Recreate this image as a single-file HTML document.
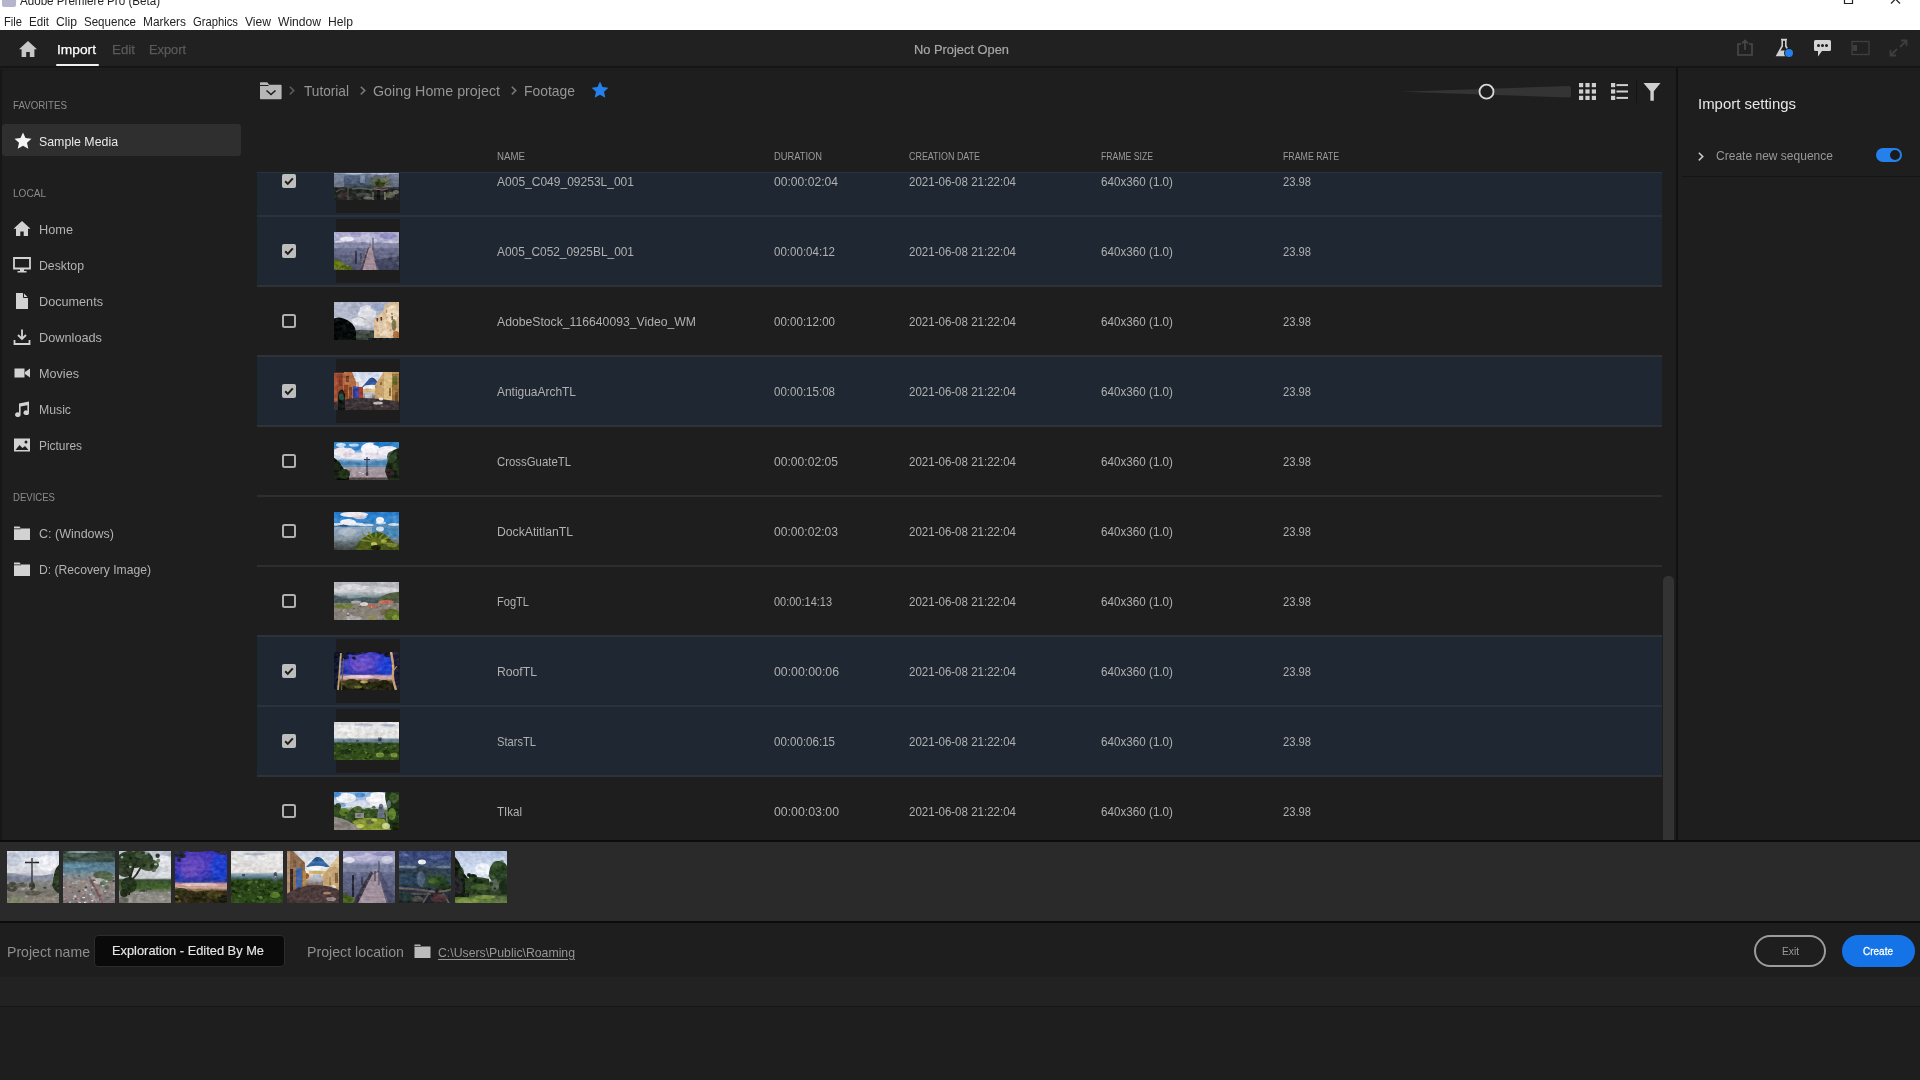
<!DOCTYPE html>
<html lang="en">
<head>
<meta charset="utf-8">
<title>Adobe Premiere Pro (Beta)</title>
<style>
html,body{margin:0;padding:0}
body{width:1920px;height:1080px;overflow:hidden;background:#1e1e1e;position:relative;font-family:'Liberation Sans', sans-serif;}
.t{position:absolute;white-space:pre;transform-origin:0 50%;display:block}
.appicon{position:absolute;left:2px;top:-7px;width:14px;height:14px;border-radius:2px;background:#2a2a6e;opacity:.35}
.th{overflow:hidden;background:#555}

</style>
</head>
<body>
<div style="position:absolute;left:0px;top:0px;width:1920px;height:30px;background:#ffffff;"></div>
<div class="appicon"></div>
<span class="t" style="left:20px;top:-6.50px;font-size:12px;line-height:14px;color:#222;transform:scaleX(0.9673);">Adobe Premiere Pro (Beta)</span>
<span class="t" style="left:4px;top:15.00px;font-size:12.5px;line-height:15px;color:#222;transform:scaleX(0.8930);">File</span>
<span class="t" style="left:29px;top:15.00px;font-size:12.5px;line-height:15px;color:#222;transform:scaleX(0.9282);">Edit</span>
<span class="t" style="left:56px;top:15.00px;font-size:12.5px;line-height:15px;color:#222;transform:scaleX(0.9746);">Clip</span>
<span class="t" style="left:84px;top:15.00px;font-size:12.5px;line-height:15px;color:#222;transform:scaleX(0.9234);">Sequence</span>
<span class="t" style="left:143px;top:15.00px;font-size:12.5px;line-height:15px;color:#222;transform:scaleX(0.9522);">Markers</span>
<span class="t" style="left:193px;top:15.00px;font-size:12.5px;line-height:15px;color:#222;transform:scaleX(0.8994);">Graphics</span>
<span class="t" style="left:245px;top:15.00px;font-size:12.5px;line-height:15px;color:#222;transform:scaleX(0.9674);">View</span>
<span class="t" style="left:278px;top:15.00px;font-size:12.5px;line-height:15px;color:#222;transform:scaleX(0.9670);">Window</span>
<span class="t" style="left:328px;top:15.00px;font-size:12.5px;line-height:15px;color:#222;transform:scaleX(0.9721);">Help</span>
<svg style="position:absolute;left:1840px;top:0" width="70" height="8" viewBox="0 0 70 8"><path d="M4.5 0v3.5h8V0" fill="none" stroke="#222" stroke-width="1.2"/><path d="M51 3.5L55.5 -1L60 3.5" fill="none" stroke="#222" stroke-width="1.2"/></svg>
<div style="position:absolute;left:0px;top:30px;width:1920px;height:37px;background:#212121;"></div>
<div style="position:absolute;left:0px;top:66px;width:1920px;height:2px;background:#151515;"></div>
<div style="position:absolute;left:0px;top:70px;width:1920px;height:1px;background:#1b1b1b;"></div>
<svg style="position:absolute;left:18px;top:40px" width="20" height="18" viewBox="0 0 20 18"><path d="M10 1L1 9.2h2.6V17h4.6v-5h3.6v5h4.6V9.2H19z" fill="#c8c8c8"/></svg>
<span class="t" style="left:57px;top:42.00px;font-size:13.2px;line-height:16px;color:#ffffff;transform:scaleX(1.0435);-webkit-text-stroke:0.25px #fff;">Import</span>
<div style="position:absolute;left:56px;top:64px;width:43px;height:2px;background:#f0f0f0;border-radius:1px;"></div>
<span class="t" style="left:112px;top:42.00px;font-size:13.2px;line-height:16px;color:#5a5a5a;transform:scaleX(1.0117);-webkit-text-stroke:0.25px #5a5a5a;">Edit</span>
<span class="t" style="left:149px;top:42.00px;font-size:13.2px;line-height:16px;color:#5a5a5a;transform:scaleX(0.9705);-webkit-text-stroke:0.25px #5a5a5a;">Export</span>
<span class="t" style="left:914px;top:41.60px;font-size:13.6px;line-height:16px;color:#a8a8a8;transform:scaleX(0.9453);-webkit-text-stroke:0.2px #a8a8a8;">No Project Open</span>
<svg style="position:absolute;left:1736px;top:39px" width="18" height="18" viewBox="0 0 18 18"><path d="M5 5H2v11h14V5h-3" fill="none" stroke="#4a4a4a" stroke-width="1.6"/><path d="M9 11V2M6 4.5L9 1.5l3 3" fill="none" stroke="#4a4a4a" stroke-width="1.6"/></svg>
<svg style="position:absolute;left:1774px;top:38px" width="22" height="22" viewBox="0 0 22 22"><path d="M7 1.5h6M8.2 2v6L3 17.5h14L11.8 8V2z" fill="none" stroke="#d0d0d0" stroke-width="1.6"/><path d="M6 12.5L3.2 17.5h13.6L14 12.5z" fill="#d0d0d0"/><circle cx="15" cy="15" r="5" fill="#1e1e1e"/><circle cx="15" cy="15" r="4" fill="#2680eb"/></svg>
<svg style="position:absolute;left:1813px;top:39px" width="20" height="20" viewBox="0 0 20 20"><path d="M2.5 1h14a1.5 1.5 0 0 1 1.5 1.5v8a1.5 1.5 0 0 1-1.5 1.5H9l-4 5.5V12H2.5A1.5 1.5 0 0 1 1 10.500v-8A1.5 1.5 0 0 1 2.500 1z" fill="#d4d4d4"/><circle cx="5.500" cy="6.5" r="1.5" fill="#1e1e1e"/><circle cx="9.5" cy="6.5" r="1.5" fill="#1e1e1e"/><circle cx="13.5" cy="6.5" r="1.5" fill="#1e1e1e"/></svg>
<svg style="position:absolute;left:1851px;top:40px" width="20" height="16" viewBox="0 0 20 16"><rect x="1" y="1.5" width="17" height="13" fill="none" stroke="#3e3e3e" stroke-width="1.4"/><rect x="2" y="5" width="4" height="6" fill="#3e3e3e"/></svg>
<svg style="position:absolute;left:1889px;top:39px" width="20" height="18" viewBox="0 0 20 18"><path d="M11 8L17 2M12 1.500h5.5V7M8 10L2 16M1.500 11v5.500H7" fill="none" stroke="#3e3e3e" stroke-width="1.8"/></svg>
<span class="t" style="left:13px;top:100.00px;font-size:10.4px;line-height:12px;color:#8c8c8c;transform:scaleX(0.9384);">FAVORITES</span>
<div style="position:absolute;left:2px;top:124px;width:239px;height:32px;background:#2f2f2f;border-radius:3px;"></div>
<svg style="position:absolute;left:13.5px;top:131.5px" width="18" height="18" viewBox="0 0 18 18"><path d="M9 0.500l2.500 5.600 6 .600-4.500 4.100 1.300 6L9 13.700 3.700 16.800l1.300-6L0.500 6.700l6-.600z" fill="#f4f4f4"/></svg>
<span class="t" style="left:39px;top:134.00px;font-size:13.2px;line-height:16px;color:#e8e8e8;transform:scaleX(0.9372);">Sample Media</span>
<span class="t" style="left:13px;top:188.00px;font-size:10.4px;line-height:12px;color:#8c8c8c;transform:scaleX(0.9684);">LOCAL</span>
<svg style="position:absolute;left:13px;top:220px" width="18" height="18" viewBox="0 0 18 18"><path d="M9 1L0.500 8.700H3V16h4.300v-4.600h3.400V16H15V8.700h2.500z" fill="#d2d2d2"/></svg>
<span class="t" style="left:39px;top:222.00px;font-size:13.2px;line-height:16px;color:#b2b2b2;transform:scaleX(0.9663);">Home</span>
<svg style="position:absolute;left:13px;top:256px" width="18" height="18" viewBox="0 0 18 18"><path d="M1 2h16v10.500H1z" fill="none" stroke="#d2d2d2" stroke-width="1.800"/><path d="M7 13h4v2h2.500v1.500h-9V15H7z" fill="#d2d2d2"/></svg>
<span class="t" style="left:39px;top:258.00px;font-size:13.2px;line-height:16px;color:#b2b2b2;transform:scaleX(0.9299);">Desktop</span>
<svg style="position:absolute;left:13px;top:292px" width="18" height="18" viewBox="0 0 18 18"><path d="M3 1h7.500L15 5.500V17H3z" fill="#d2d2d2"/><path d="M10.500 1v4.500H15" fill="none" stroke="#1e1e1e" stroke-width="1"/></svg>
<span class="t" style="left:39px;top:294.00px;font-size:13.2px;line-height:16px;color:#b2b2b2;transform:scaleX(0.9595);">Documents</span>
<svg style="position:absolute;left:13px;top:328px" width="18" height="18" viewBox="0 0 18 18"><path d="M9 1.500v9M5 7l4 4 4-4" fill="none" stroke="#d2d2d2" stroke-width="1.800"/><path d="M1.500 12v4h15v-4" fill="none" stroke="#d2d2d2" stroke-width="1.800"/></svg>
<span class="t" style="left:39px;top:330.00px;font-size:13.2px;line-height:16px;color:#b2b2b2;transform:scaleX(0.9655);">Downloads</span>
<svg style="position:absolute;left:13px;top:364px" width="18" height="18" viewBox="0 0 18 18"><path d="M1.500 4.500h10v9h-10z" fill="#d2d2d2"/><path d="M12 8l5-3.500v9L12 10z" fill="#d2d2d2"/></svg>
<span class="t" style="left:39px;top:366.00px;font-size:13.2px;line-height:16px;color:#b2b2b2;transform:scaleX(0.9574);">Movies</span>
<svg style="position:absolute;left:13px;top:400px" width="18" height="18" viewBox="0 0 18 18"><path d="M6 3.500L16 1.500v11.200a2.800 2.300 0 1 1-1.600-2V5.200L7.600 6.600v8a2.800 2.300 0 1 1-1.600-2z" fill="#d2d2d2"/></svg>
<span class="t" style="left:39px;top:402.00px;font-size:13.2px;line-height:16px;color:#b2b2b2;transform:scaleX(0.9292);">Music</span>
<svg style="position:absolute;left:13px;top:436px" width="18" height="18" viewBox="0 0 18 18"><path d="M1 2.500h16v13H1z" fill="#d2d2d2"/><path d="M2.500 14l4-5 3 3 2.500-2 3.500 4z" fill="#1e1e1e"/><circle cx="13" cy="6" r="1.500" fill="#1e1e1e"/></svg>
<span class="t" style="left:39px;top:438.00px;font-size:13.2px;line-height:16px;color:#b2b2b2;transform:scaleX(0.9026);">Pictures</span>
<span class="t" style="left:13px;top:492.00px;font-size:10.4px;line-height:12px;color:#8c8c8c;transform:scaleX(0.9205);">DEVICES</span>
<svg style="position:absolute;left:13px;top:524px" width="18" height="18" viewBox="0 0 18 18"><path d="M1 2.500h5.500l1.500 2H17V16H1z" fill="#d2d2d2"/><path d="M1 4.800h7" stroke="#1e1e1e" stroke-width="0.800"/></svg>
<span class="t" style="left:39px;top:526.00px;font-size:13.2px;line-height:16px;color:#b2b2b2;transform:scaleX(0.9477);">C: (Windows)</span>
<svg style="position:absolute;left:13px;top:560px" width="18" height="18" viewBox="0 0 18 18"><path d="M1 2.500h5.500l1.500 2H17V16H1z" fill="#d2d2d2"/><path d="M1 4.800h7" stroke="#1e1e1e" stroke-width="0.800"/></svg>
<span class="t" style="left:39px;top:562.00px;font-size:13.2px;line-height:16px;color:#b2b2b2;transform:scaleX(0.9206);">D: (Recovery Image)</span>
<svg style="position:absolute;left:259px;top:81px" width="24" height="20" viewBox="0 0 24 20"><path d="M1.800 1.200h6.400l2 2.500h11.600a.8.8 0 0 1 .8.800V17.400a.8.800 0 0 1-.8.800H1.800a.8.800 0 0 1-.8-.8V2a.8.800 0 0 1 .8-.8z" fill="#b6b6b6"/><path d="M1 4.500h8.500" stroke="#1e1e1e" stroke-width="1"/><path d="M7.500 9.500l4.500 4 4.500-4" fill="none" stroke="#1e1e1e" stroke-width="1.600"/></svg>
<svg style="position:absolute;left:288px;top:85px" width="8" height="12" viewBox="0 0 8 12"><path d="M1.800 1.800L5.800 5.600l-4 3.800" fill="none" stroke="#5c5c5c" stroke-width="1.500"/></svg>
<span class="t" style="left:304px;top:82.00px;font-size:15px;line-height:18px;color:#959595;transform:scaleX(0.9097);">Tutorial</span>
<svg style="position:absolute;left:359px;top:85px" width="8" height="12" viewBox="0 0 8 12"><path d="M1.800 1.800L5.800 5.600l-4 3.800" fill="none" stroke="#7a7a7a" stroke-width="1.500"/></svg>
<span class="t" style="left:373px;top:82.00px;font-size:15px;line-height:18px;color:#959595;transform:scaleX(0.9520);">Going Home project</span>
<svg style="position:absolute;left:510px;top:85px" width="8" height="12" viewBox="0 0 8 12"><path d="M1.800 1.800L5.800 5.600l-4 3.800" fill="none" stroke="#7a7a7a" stroke-width="1.500"/></svg>
<span class="t" style="left:524px;top:82.00px;font-size:15px;line-height:18px;color:#959595;transform:scaleX(0.9265);">Footage</span>
<svg style="position:absolute;left:591px;top:81px" width="18" height="18" viewBox="0 0 18 18"><path d="M9 0.500l2.500 5.600 6 .600-4.500 4.100 1.300 6L9 13.700 3.700 16.800l1.300-6L0.500 6.700l6-.600z" fill="#2680eb"/></svg>
<svg style="position:absolute;left:1398px;top:80px" width="180" height="24" viewBox="0 0 180 24"><path d="M3 11.700L171 6a2 2 0 0 1 2 2v7.500a2 2 0 0 1-2 2z" fill="#343434"/><circle cx="88.500" cy="11.700" r="7" fill="#1e1e1e" stroke="#d8d8d8" stroke-width="1.800"/></svg>
<svg style="position:absolute;left:1579px;top:83px" width="18" height="18" viewBox="0 0 18 18"><rect x="0" y="0" width="4.200" height="4.200" fill="#cfcfcf"/><rect x="0" y="6.4" width="4.200" height="4.200" fill="#cfcfcf"/><rect x="0" y="12.8" width="4.200" height="4.200" fill="#cfcfcf"/><rect x="6.4" y="0" width="4.200" height="4.200" fill="#cfcfcf"/><rect x="6.4" y="6.4" width="4.200" height="4.200" fill="#cfcfcf"/><rect x="6.4" y="12.8" width="4.200" height="4.200" fill="#cfcfcf"/><rect x="12.8" y="0" width="4.200" height="4.200" fill="#cfcfcf"/><rect x="12.8" y="6.4" width="4.200" height="4.200" fill="#cfcfcf"/><rect x="12.8" y="12.8" width="4.200" height="4.200" fill="#cfcfcf"/></svg>
<svg style="position:absolute;left:1611px;top:83px" width="18" height="18" viewBox="0 0 18 18"><rect x="0" y="0" width="4.200" height="4.200" fill="#cfcfcf"/><rect x="5.500" y="1.1" width="11.500" height="2" fill="#cfcfcf"/><rect x="0" y="6.4" width="4.200" height="4.200" fill="#cfcfcf"/><rect x="5.500" y="7.5" width="11.500" height="2" fill="#cfcfcf"/><rect x="0" y="12.8" width="4.200" height="4.200" fill="#cfcfcf"/><rect x="5.500" y="13.9" width="11.500" height="2" fill="#cfcfcf"/></svg>
<div style="position:absolute;left:1636px;top:80px;width:1px;height:23px;background:#141414;"></div>
<svg style="position:absolute;left:1643px;top:82px" width="18" height="20" viewBox="0 0 18 20"><path d="M0.500 1h17L10.800 9.200V18.800H7.400V9.200z" fill="#cfcfcf"/></svg>
<span class="t" style="left:497px;top:151.00px;font-size:10px;line-height:12px;color:#9a9a9a;transform:scaleX(0.9686);">NAME</span>
<span class="t" style="left:774px;top:151.00px;font-size:10px;line-height:12px;color:#9a9a9a;transform:scaleX(0.9323);">DURATION</span>
<span class="t" style="left:909px;top:151.00px;font-size:10px;line-height:12px;color:#9a9a9a;transform:scaleX(0.8915);">CREATION DATE</span>
<span class="t" style="left:1101px;top:151.00px;font-size:10px;line-height:12px;color:#9a9a9a;transform:scaleX(0.8664);">FRAME SIZE</span>
<span class="t" style="left:1283px;top:151.00px;font-size:10px;line-height:12px;color:#9a9a9a;transform:scaleX(0.8789);">FRAME RATE</span>
<div style="position:absolute;left:257px;top:172px;width:1406px;height:668px;overflow:hidden">
<div style="position:absolute;left:0;top:-26px;width:1405px;height:70px;background:#1f2832"></div>
<div style="position:absolute;left:79px;top:-23px;width:64px;height:64px;background:#1d1d1e"></div>
<div style="position:absolute;left:0;top:-27px;width:1405px;height:2px;background:#2f3236"></div>
<svg style="position:absolute;left:25px;top:2px" width="14" height="14" viewBox="0 0 14 14"><rect width="14" height="14" rx="2" fill="#bdbdbd"/><path d="M3.200 7.200l2.600 2.700 5-5.600" fill="none" stroke="#1c1c1c" stroke-width="2"/></svg>
<svg style="position:absolute;left:77px;top:-10px" width="65" height="38" viewBox="0 0 65 38" preserveAspectRatio="none"><defs><linearGradient id="g1" x1="0" y1="0" x2="0" y2="1"><stop offset="0" stop-color="#8d93b4"/><stop offset="0.26" stop-color="#9096b6"/><stop offset="0.32" stop-color="#a4aac6"/><stop offset="0.36" stop-color="#65728c"/><stop offset="0.5" stop-color="#4c5c72"/><stop offset="0.62" stop-color="#3e4a56"/><stop offset="0.7" stop-color="#2e3030"/><stop offset="1" stop-color="#2a2a28"/></linearGradient><filter id="b_t_palm" x="-20%" y="-20%" width="140%" height="140%" color-interpolation-filters="sRGB"><feGaussianBlur in="SourceGraphic" stdDeviation="0.6" result="b"/><feTurbulence type="fractalNoise" baseFrequency="0.22 0.3" numOctaves="3" seed="56" result="n"/><feColorMatrix in="n" type="matrix" values="0.8 0.8 0.8 0 -0.7  0.8 0.8 0.8 0 -0.7  0.8 0.8 0.8 0 -0.7  0 0 0 0 1" result="g"/><feComposite in="b" in2="g" operator="arithmetic" k1="0" k2="1" k3="0.16" k4="-0.080"/></filter></defs><g filter="url(#b_t_palm)"><rect x="-3" y="-3" width="71" height="44" fill="url(#g1)"/><rect x="-2" y="13" width="12" height="12" fill="#8a94aa" opacity="0.55"/><rect x="10" y="14" width="14" height="8" fill="#50607c" opacity="0.5"/><rect x="26" y="13" width="5" height="8" fill="#8c94ac" opacity="0.6"/><rect x="50" y="13" width="18" height="12" fill="#7c829c" opacity="0.6"/><ellipse cx="20" cy="11.5" rx="9" ry="1.2" fill="#b8bcd4" opacity="0.9"/><ellipse cx="46" cy="11.5" rx="10" ry="1.2" fill="#b4b8d0" opacity="0.9"/><path d="M46 24L36 16M46 24L40 14M46 24L46 13M46 24L52 14M46 24L57 17M46 24L59 22M46 24L35 21M46 24l12 4M46 24l-10 4" fill="none" stroke="#5a5c3e" stroke-width="1.6"/><ellipse cx="46" cy="21" rx="5" ry="4" fill="#2c3a18" opacity="0.95"/><ellipse cx="50" cy="18" rx="4" ry="3" fill="#6c6e4a" opacity="0.7"/><ellipse cx="41" cy="18" rx="3" ry="2" fill="#6a6c50" opacity="0.6"/><path d="M-2 40V27q8-3 16-1t14 1q10 2 20 0t19 1V40z" fill="#262827"/><path d="M2 30q4-4 10-3M4 34h10M14 25v14" fill="none" stroke="#5a5450" stroke-width="1"/><ellipse cx="8" cy="33" rx="4" ry="3" fill="#3a302e" opacity="0.8"/><path d="M18 27q10-2 20 1" fill="none" stroke="#54645c" stroke-width="1.4"/><ellipse cx="30" cy="33" rx="8" ry="2" fill="#4c5650" opacity="0.7"/><path d="M40 27l8 1 6-1" fill="none" stroke="#94606c" stroke-width="1"/><rect x="43" y="28" width="3" height="10" fill="#161616"/><rect x="38" y="30" width="2" height="8" fill="#55564c"/><rect x="50" y="30" width="2" height="8" fill="#6a6a5c"/><ellipse cx="56" cy="33" rx="5" ry="3" fill="#6c6a54" opacity="0.8"/><ellipse cx="34" cy="36" rx="5" ry="1.6" fill="#74746a" opacity="0.8"/><ellipse cx="62" cy="30" rx="3" ry="2" fill="#8a8c90" opacity="0.7"/></g></svg>
<span class="t" style="left:240px;top:2.20px;font-size:13.1px;line-height:16px;color:#b0b0b0;transform:scaleX(0.9177);">A005_C049_09253L_001</span>
<span class="t" style="left:517px;top:2.20px;font-size:13.1px;line-height:16px;color:#b0b0b0;transform:scaleX(0.9252);">00:00:02:04</span>
<span class="t" style="left:652px;top:2.20px;font-size:13.1px;line-height:16px;color:#b0b0b0;transform:scaleX(0.8800);">2021-06-08 21:22:04</span>
<span class="t" style="left:844px;top:2.20px;font-size:13.1px;line-height:16px;color:#b0b0b0;transform:scaleX(0.8910);">640x360 (1.0)</span>
<span class="t" style="left:1026px;top:2.20px;font-size:13.1px;line-height:16px;color:#b0b0b0;transform:scaleX(0.8541);">23.98</span>
<div style="position:absolute;left:0;top:44px;width:1405px;height:70px;background:#1f2832"></div>
<div style="position:absolute;left:79px;top:47px;width:64px;height:64px;background:#1d1d1e"></div>
<div style="position:absolute;left:0;top:43px;width:1405px;height:2px;background:#2a323d"></div>
<svg style="position:absolute;left:25px;top:72px" width="14" height="14" viewBox="0 0 14 14"><rect width="14" height="14" rx="2" fill="#bdbdbd"/><path d="M3.200 7.200l2.600 2.700 5-5.600" fill="none" stroke="#1c1c1c" stroke-width="2"/></svg>
<svg style="position:absolute;left:77px;top:60px" width="65" height="38" viewBox="0 0 65 38" preserveAspectRatio="none"><defs><linearGradient id="g2" x1="0" y1="0" x2="0" y2="1"><stop offset="0" stop-color="#9b98c6"/><stop offset="0.14" stop-color="#b4b2d4"/><stop offset="0.28" stop-color="#a6a4c4"/><stop offset="0.33" stop-color="#80849f"/><stop offset="0.45" stop-color="#6e7290"/><stop offset="0.7" stop-color="#5c607c"/><stop offset="1" stop-color="#4a4e66"/></linearGradient><filter id="b_t_dock" x="-20%" y="-20%" width="140%" height="140%" color-interpolation-filters="sRGB"><feGaussianBlur in="SourceGraphic" stdDeviation="0.55" result="b"/><feTurbulence type="fractalNoise" baseFrequency="0.22 0.3" numOctaves="3" seed="47" result="n"/><feColorMatrix in="n" type="matrix" values="0.8 0.8 0.8 0 -0.7  0.8 0.8 0.8 0 -0.7  0.8 0.8 0.8 0 -0.7  0 0 0 0 1" result="g"/><feComposite in="b" in2="g" operator="arithmetic" k1="0" k2="1" k3="0.16" k4="-0.080"/></filter></defs><g filter="url(#b_t_dock)"><rect x="-3" y="-3" width="71" height="44" fill="url(#g2)"/><ellipse cx="13" cy="7" rx="7" ry="2.6" fill="#ececf4" opacity="0.95"/><ellipse cx="6" cy="10" rx="5" ry="1.5" fill="#dcdcea" opacity="0.8"/><ellipse cx="28" cy="6" rx="9" ry="4" fill="#c2bed8" opacity="0.8"/><ellipse cx="38" cy="9" rx="6" ry="3" fill="#d0cce0" opacity="0.7"/><ellipse cx="54" cy="4" rx="9" ry="3" fill="#8a88c2" opacity="0.8"/><ellipse cx="57" cy="10" rx="8" ry="1.8" fill="#c8c8de" opacity="0.8"/><ellipse cx="22" cy="3" rx="6" ry="2" fill="#9a96c6" opacity="0.7"/><path d="M-2 12q8-3 16-1t14 2l8-1q12-2 31 0V16H-2z" fill="#8589a6"/><path d="M34 14L25 40H45L38 14z" fill="#a48e9a"/><path d="M34 15l-9 25h3l7-24z" fill="#443e4e"/><path d="M38 15l5 25h3l-7-25z" fill="#5a5468" opacity="0.8"/><path d="M31 22l8 0M29 27h11M27 32h14" fill="none" stroke="#8c7684" stroke-width="0.6"/><path d="M22 19v13" fill="none" stroke="#2c2c38" stroke-width="1.6"/><path d="M27 21v8" fill="none" stroke="#3a3a48" stroke-width="1.2"/><path d="M39 6v13" fill="none" stroke="#55556a" stroke-width="1.2"/><path d="M36 10v6" fill="none" stroke="#62627a" stroke-width="0.8"/><ellipse cx="4" cy="33" rx="6" ry="4.5" fill="#6a7c18"/><ellipse cx="12" cy="36" rx="7" ry="3" fill="#4c5c18"/><ellipse cx="2" cy="28" rx="3" ry="2" fill="#4a5a2c" opacity="0.8"/><ellipse cx="3.8" cy="33.4" rx="0.9" ry="0.8" fill="#5a6c1c" opacity="0.76"/><ellipse cx="9.7" cy="37.1" rx="1.0" ry="0.9" fill="#8a9a28" opacity="0.95"/><ellipse cx="7.5" cy="36.4" rx="1.0" ry="0.9" fill="#8a9a28" opacity="0.6"/><ellipse cx="2.4" cy="37.3" rx="0.9" ry="0.5" fill="#8a9a28" opacity="0.57"/><ellipse cx="15.3" cy="28.4" rx="1.2" ry="1.2" fill="#3c4a14" opacity="0.71"/><ellipse cx="11.5" cy="36.8" rx="1.2" ry="1.3" fill="#3c4a14" opacity="0.83"/><ellipse cx="9.2" cy="37.6" rx="0.7" ry="0.5" fill="#8a9a28" opacity="0.56"/><ellipse cx="3.5" cy="37.7" rx="0.9" ry="0.8" fill="#3c4a14" opacity="0.69"/><ellipse cx="13.3" cy="33.7" rx="1.0" ry="0.8" fill="#8a9a28" opacity="0.91"/><ellipse cx="10.9" cy="37.3" rx="1.3" ry="1.4" fill="#5a6c1c" opacity="0.81"/><path d="M46 40l-6-12 27-4v16z" fill="#3e425a" opacity="0.75"/></g></svg>
<span class="t" style="left:240px;top:72.20px;font-size:13.1px;line-height:16px;color:#b0b0b0;transform:scaleX(0.9089);">A005_C052_0925BL_001</span>
<span class="t" style="left:517px;top:72.20px;font-size:13.1px;line-height:16px;color:#b0b0b0;transform:scaleX(0.8819);">00:00:04:12</span>
<span class="t" style="left:652px;top:72.20px;font-size:13.1px;line-height:16px;color:#b0b0b0;transform:scaleX(0.8800);">2021-06-08 21:22:04</span>
<span class="t" style="left:844px;top:72.20px;font-size:13.1px;line-height:16px;color:#b0b0b0;transform:scaleX(0.8910);">640x360 (1.0)</span>
<span class="t" style="left:1026px;top:72.20px;font-size:13.1px;line-height:16px;color:#b0b0b0;transform:scaleX(0.8541);">23.98</span>
<div style="position:absolute;left:0;top:113px;width:1405px;height:2px;background:#2f3236"></div>
<svg style="position:absolute;left:25px;top:142px" width="14" height="14" viewBox="0 0 14 14"><rect x="1" y="1" width="12" height="12" rx="1.500" fill="#202020" stroke="#b0b0b0" stroke-width="2"/></svg>
<svg style="position:absolute;left:77px;top:130px" width="65" height="38" viewBox="0 0 65 38" preserveAspectRatio="none"><defs><linearGradient id="g3" x1="0" y1="0" x2="0" y2="1"><stop offset="0" stop-color="#a4aac2"/><stop offset="0.3" stop-color="#b2b8cc"/><stop offset="0.6" stop-color="#c4c8d4"/><stop offset="0.8" stop-color="#7a8290"/><stop offset="1" stop-color="#2c3434"/></linearGradient><filter id="b_t_ruin" x="-20%" y="-20%" width="140%" height="140%" color-interpolation-filters="sRGB"><feGaussianBlur in="SourceGraphic" stdDeviation="0.55" result="b"/><feTurbulence type="fractalNoise" baseFrequency="0.22 0.3" numOctaves="3" seed="76" result="n"/><feColorMatrix in="n" type="matrix" values="0.8 0.8 0.8 0 -0.7  0.8 0.8 0.8 0 -0.7  0.8 0.8 0.8 0 -0.7  0 0 0 0 1" result="g"/><feComposite in="b" in2="g" operator="arithmetic" k1="0" k2="1" k3="0.16" k4="-0.080"/></filter></defs><g filter="url(#b_t_ruin)"><rect x="-3" y="-3" width="71" height="44" fill="url(#g3)"/><ellipse cx="8" cy="5" rx="10" ry="5" fill="#b8bcd0" opacity="0.8"/><ellipse cx="33" cy="11" rx="9" ry="8" fill="#e0e0e6" opacity="0.95"/><ellipse cx="26" cy="19" rx="8" ry="5" fill="#e4e4e8" opacity="0.85"/><ellipse cx="44" cy="5" rx="7" ry="4" fill="#94a2c4" opacity="0.8"/><ellipse cx="20" cy="8" rx="6" ry="4" fill="#a4a8bc" opacity="0.7"/><ellipse cx="36" cy="20" rx="6" ry="6" fill="#c8c8d0" opacity="0.8"/><path d="M18 16q8-3 14 2" fill="none" stroke="#8c90a0" stroke-width="0.7"/><path d="M18 40V30q6-3 12-2t12 0V40z" fill="#3a443c"/><ellipse cx="30" cy="30" rx="6" ry="2" fill="#566058" opacity="0.8"/><path d="M-2 17q7-3 13 0q10 4 11 13v10H-2z" fill="#070a0a"/><path d="M40 40V17l4-2 1-3 4-2 2-7 6-3h10V40z" fill="#d8bc98"/><ellipse cx="58" cy="12" rx="6" ry="9" fill="#efdcc2" opacity="0.85"/><ellipse cx="48" cy="26" rx="5" ry="8" fill="#e8d2b8" opacity="0.7"/><ellipse cx="54" cy="31" rx="5" ry="4" fill="#f0e0cc" opacity="0.6"/><rect x="42.5" y="16" width="1.6" height="3.4" fill="#54382c"/><rect x="46.5" y="15" width="1.6" height="3.6" fill="#54382c"/><rect x="57.5" y="14" width="1.4" height="4" fill="#7a5838"/><rect x="52" y="8" width="1.2" height="3" fill="#a88c68"/><ellipse cx="60" cy="23" rx="2.4" ry="6" fill="#6a663a" opacity="0.8"/><ellipse cx="62" cy="33" rx="3" ry="4" fill="#a86028" opacity="0.85"/><ellipse cx="56.6" cy="28.3" rx="1.1" ry="1.2" fill="#b89870" opacity="0.88"/><ellipse cx="60.4" cy="13.5" rx="0.5" ry="0.4" fill="#c8a47c" opacity="0.71"/><ellipse cx="47.2" cy="22.3" rx="0.9" ry="0.5" fill="#f4e4cc" opacity="0.68"/><ellipse cx="45.6" cy="32.0" rx="0.8" ry="0.8" fill="#b89870" opacity="0.56"/><ellipse cx="56.4" cy="9.8" rx="0.5" ry="0.5" fill="#f4e4cc" opacity="0.85"/><ellipse cx="65.0" cy="11.0" rx="0.6" ry="0.5" fill="#f4e4cc" opacity="0.74"/><ellipse cx="57.9" cy="12.1" rx="1.2" ry="1.1" fill="#8a7050" opacity="0.63"/><ellipse cx="50.0" cy="11.0" rx="0.6" ry="0.4" fill="#c8a47c" opacity="0.87"/><ellipse cx="55.7" cy="23.9" rx="1.0" ry="0.6" fill="#c8a47c" opacity="0.87"/><ellipse cx="53.0" cy="15.5" rx="0.8" ry="0.8" fill="#b89870" opacity="0.62"/><ellipse cx="64.5" cy="34.5" rx="0.8" ry="0.6" fill="#8a7050" opacity="0.66"/><ellipse cx="55.5" cy="6.3" rx="0.5" ry="0.4" fill="#f4e4cc" opacity="0.55"/><ellipse cx="47.2" cy="30.6" rx="0.8" ry="0.7" fill="#c8a47c" opacity="0.85"/><ellipse cx="43.7" cy="28.5" rx="1.1" ry="1.1" fill="#b89870" opacity="0.69"/><rect x="34" y="36" width="34" height="4" fill="#182022"/></g></svg>
<span class="t" style="left:240px;top:142.20px;font-size:13.1px;line-height:16px;color:#b0b0b0;transform:scaleX(0.9319);">AdobeStock_116640093_Video_WM</span>
<span class="t" style="left:517px;top:142.20px;font-size:13.1px;line-height:16px;color:#b0b0b0;transform:scaleX(0.8819);">00:00:12:00</span>
<span class="t" style="left:652px;top:142.20px;font-size:13.1px;line-height:16px;color:#b0b0b0;transform:scaleX(0.8800);">2021-06-08 21:22:04</span>
<span class="t" style="left:844px;top:142.20px;font-size:13.1px;line-height:16px;color:#b0b0b0;transform:scaleX(0.8910);">640x360 (1.0)</span>
<span class="t" style="left:1026px;top:142.20px;font-size:13.1px;line-height:16px;color:#b0b0b0;transform:scaleX(0.8541);">23.98</span>
<div style="position:absolute;left:0;top:184px;width:1405px;height:70px;background:#1f2832"></div>
<div style="position:absolute;left:79px;top:187px;width:64px;height:64px;background:#1d1d1e"></div>
<div style="position:absolute;left:0;top:183px;width:1405px;height:2px;background:#2f3236"></div>
<svg style="position:absolute;left:25px;top:212px" width="14" height="14" viewBox="0 0 14 14"><rect width="14" height="14" rx="2" fill="#bdbdbd"/><path d="M3.200 7.200l2.600 2.700 5-5.600" fill="none" stroke="#1c1c1c" stroke-width="2"/></svg>
<svg style="position:absolute;left:77px;top:200px" width="65" height="38" viewBox="0 0 65 38" preserveAspectRatio="none"><defs><linearGradient id="g4" x1="0" y1="0" x2="0" y2="1"><stop offset="0" stop-color="#c4d0e6"/><stop offset="0.3" stop-color="#e0e6f0"/><stop offset="0.5" stop-color="#d8d8dc"/><stop offset="0.72" stop-color="#5a4c4c"/><stop offset="1" stop-color="#382f30"/></linearGradient><filter id="b_t_arch" x="-20%" y="-20%" width="140%" height="140%" color-interpolation-filters="sRGB"><feGaussianBlur in="SourceGraphic" stdDeviation="0.5" result="b"/><feTurbulence type="fractalNoise" baseFrequency="0.22 0.3" numOctaves="3" seed="44" result="n"/><feColorMatrix in="n" type="matrix" values="0.8 0.8 0.8 0 -0.7  0.8 0.8 0.8 0 -0.7  0.8 0.8 0.8 0 -0.7  0 0 0 0 1" result="g"/><feComposite in="b" in2="g" operator="arithmetic" k1="0" k2="1" k3="0.16" k4="-0.080"/></filter></defs><g filter="url(#b_t_arch)"><rect x="-3" y="-3" width="71" height="44" fill="url(#g4)"/><path d="M28 15l7-8q3-3 6 0l7 8z" fill="#34589a"/><path d="M33 10l3-3.500q2-1 4 0l3 3.500z" fill="#2c4c8c"/><ellipse cx="38" cy="14.5" rx="8" ry="1.7" fill="#f2f2f6"/><rect x="27" y="17" width="14" height="3" fill="#d4b468" opacity="0.9"/><rect x="31" y="20" width="7" height="8" fill="#c4c8d0" opacity="0.8"/><path d="M-2 -2h19l5 13v27H-2z" fill="#94482f"/><rect x="-2" y="-2" width="5" height="42" fill="#a8553a" opacity="0.85"/><path d="M9 -2h8l5 12v28H9z" fill="#b06c44"/><rect x="10" y="13" width="4" height="24" fill="#8c4422"/><rect x="15" y="15" width="3" height="18" fill="#70361c" opacity="0.8"/><rect x="5" y="2" width="3" height="12" fill="#7a3424" opacity="0.7"/><rect x="-2" y="-2" width="12" height="3" fill="#2c1c18" opacity="0.9"/><rect x="12" y="4" width="3" height="6" fill="#5a2c1c" opacity="0.7"/><rect x="19" y="14" width="6" height="15" fill="#3646a2"/><rect x="25" y="15" width="4" height="13" fill="#a43a30"/><rect x="22" y="10" width="3" height="5" fill="#d8a070" opacity="0.8"/><path d="M67 -2H51l-10 15v19H67z" fill="#c8a26c"/><path d="M50 -2h8v30h-8z" fill="#dcc088" opacity="0.85"/><rect x="58" y="2" width="9" height="32" fill="#96692f" opacity="0.85"/><rect x="59" y="4" width="4" height="9" fill="#566828"/><rect x="46" y="10" width="2" height="3" fill="#8a6c44"/><rect x="55" y="16" width="2" height="8" fill="#7a5830" opacity="0.8"/><rect x="61" y="20" width="3" height="10" fill="#5a4024" opacity="0.8"/><path d="M-2 40V31q14-5 30-5t39 4V40z" fill="#3c3436"/><ellipse cx="44" cy="31" rx="5" ry="1.6" fill="#dcd8d4" opacity="0.8"/><ellipse cx="47" cy="27" rx="2.4" ry="1.4" fill="#ececec" opacity="0.9"/><ellipse cx="29.5" cy="30.2" rx="1.3" ry="0.4" fill="#5a4e4e" opacity="0.55"/><ellipse cx="16.8" cy="33.1" rx="0.6" ry="0.4" fill="#5a4e4e" opacity="0.5"/><ellipse cx="40.5" cy="29.5" rx="1.2" ry="0.6" fill="#5a4e4e" opacity="0.63"/><ellipse cx="33.0" cy="36.8" rx="0.6" ry="0.4" fill="#7a6c68" opacity="0.57"/><ellipse cx="40.0" cy="33.6" rx="1.2" ry="0.6" fill="#5a4e4e" opacity="0.63"/><ellipse cx="44.7" cy="32.0" rx="1.1" ry="0.4" fill="#5a4e4e" opacity="0.65"/><ellipse cx="37.8" cy="33.3" rx="1.4" ry="0.6" fill="#1c1818" opacity="0.54"/><ellipse cx="25.9" cy="30.4" rx="1.4" ry="0.4" fill="#7a6c68" opacity="0.61"/><ellipse cx="56.0" cy="34.8" rx="0.9" ry="0.5" fill="#5a4e4e" opacity="0.6"/><ellipse cx="21.9" cy="31.7" rx="1.5" ry="0.6" fill="#5a4e4e" opacity="0.71"/><ellipse cx="41.5" cy="36.0" rx="0.9" ry="0.4" fill="#1c1818" opacity="0.63"/><ellipse cx="35.9" cy="35.7" rx="1.5" ry="0.6" fill="#5a4e4e" opacity="0.42"/><ellipse cx="47.7" cy="34.2" rx="1.6" ry="0.8" fill="#7a6c68" opacity="0.69"/><ellipse cx="56.6" cy="31.8" rx="1.5" ry="0.6" fill="#5a4e4e" opacity="0.6"/><path d="M4 40V25q0-7 3.5-7t3.5 7V40z" fill="#141816"/><ellipse cx="7.5" cy="25" rx="2.6" ry="3.2" fill="#2a5c4c" opacity="0.85"/><ellipse cx="7.5" cy="19" rx="1.6" ry="1.6" fill="#1c1c1c"/></g></svg>
<span class="t" style="left:240px;top:212.20px;font-size:13.1px;line-height:16px;color:#b0b0b0;transform:scaleX(0.9120);">AntiguaArchTL</span>
<span class="t" style="left:517px;top:212.20px;font-size:13.1px;line-height:16px;color:#b0b0b0;transform:scaleX(0.8819);">00:00:15:08</span>
<span class="t" style="left:652px;top:212.20px;font-size:13.1px;line-height:16px;color:#b0b0b0;transform:scaleX(0.8800);">2021-06-08 21:22:04</span>
<span class="t" style="left:844px;top:212.20px;font-size:13.1px;line-height:16px;color:#b0b0b0;transform:scaleX(0.8910);">640x360 (1.0)</span>
<span class="t" style="left:1026px;top:212.20px;font-size:13.1px;line-height:16px;color:#b0b0b0;transform:scaleX(0.8541);">23.98</span>
<div style="position:absolute;left:0;top:253px;width:1405px;height:2px;background:#2f3236"></div>
<svg style="position:absolute;left:25px;top:282px" width="14" height="14" viewBox="0 0 14 14"><rect x="1" y="1" width="12" height="12" rx="1.500" fill="#202020" stroke="#b0b0b0" stroke-width="2"/></svg>
<svg style="position:absolute;left:77px;top:270px" width="65" height="38" viewBox="0 0 65 38" preserveAspectRatio="none"><defs><linearGradient id="g5" x1="0" y1="0" x2="0" y2="1"><stop offset="0" stop-color="#2a82cc"/><stop offset="0.2" stop-color="#3c8cd0"/><stop offset="0.42" stop-color="#e4e6ee"/><stop offset="0.5" stop-color="#6a9cc4"/><stop offset="0.62" stop-color="#5888b0"/><stop offset="0.7" stop-color="#b4a8b4"/><stop offset="1" stop-color="#a89ca0"/></linearGradient><filter id="b_t_cross" x="-20%" y="-20%" width="140%" height="140%" color-interpolation-filters="sRGB"><feGaussianBlur in="SourceGraphic" stdDeviation="0.5" result="b"/><feTurbulence type="fractalNoise" baseFrequency="0.22 0.3" numOctaves="3" seed="87" result="n"/><feColorMatrix in="n" type="matrix" values="0.8 0.8 0.8 0 -0.7  0.8 0.8 0.8 0 -0.7  0.8 0.8 0.8 0 -0.7  0 0 0 0 1" result="g"/><feComposite in="b" in2="g" operator="arithmetic" k1="0" k2="1" k3="0.16" k4="-0.080"/></filter></defs><g filter="url(#b_t_cross)"><rect x="-3" y="-3" width="71" height="44" fill="url(#g5)"/><ellipse cx="10" cy="10" rx="11" ry="5" fill="#ece8ee"/><ellipse cx="36" cy="7" rx="9" ry="6.5" fill="#f6f4f8"/><ellipse cx="54" cy="9" rx="11" ry="5" fill="#f0eef4"/><ellipse cx="28" cy="14" rx="22" ry="3.5" fill="#e8e4ee"/><ellipse cx="7" cy="3" rx="5" ry="2" fill="#e6ecf6" opacity="0.85"/><ellipse cx="20" cy="3" rx="5" ry="1.6" fill="#dfe8f4" opacity="0.8"/><ellipse cx="22" cy="6.5" rx="3.6" ry="1.8" fill="#2c7ec6" opacity="0.95"/><ellipse cx="48" cy="2" rx="9" ry="2.2" fill="#2276c2" opacity="0.95"/><ellipse cx="13" cy="5" rx="3" ry="1.2" fill="#3c88cc" opacity="0.8"/><ellipse cx="14" cy="13" rx="5" ry="2" fill="#d8c8d4" opacity="0.6"/><ellipse cx="44" cy="14" rx="6" ry="2" fill="#dcd0dc" opacity="0.6"/><path d="M4 18q12 1 22 2t28-3v7H4z" fill="#5c92be" opacity="0.95"/><path d="M6 21q10-3 18 0t14-1q8-2 16 0v3H6z" fill="#4a7ca8" opacity="0.7"/><rect x="8" y="25" width="46" height="14" fill="#a2949c" opacity="0.95"/><ellipse cx="29.0" cy="31.7" rx="1.2" ry="0.6" fill="#e0d8d8" opacity="0.84"/><ellipse cx="18.0" cy="34.6" rx="0.9" ry="0.5" fill="#7a6c74" opacity="0.54"/><ellipse cx="22.7" cy="26.1" rx="1.1" ry="0.6" fill="#d0c4c8" opacity="0.74"/><ellipse cx="26.6" cy="30.4" rx="1.1" ry="0.6" fill="#e0d8d8" opacity="0.51"/><ellipse cx="32.2" cy="25.7" rx="0.7" ry="0.4" fill="#d0c4c8" opacity="0.81"/><ellipse cx="23.7" cy="32.1" rx="0.7" ry="0.4" fill="#b89c9c" opacity="0.7"/><ellipse cx="37.8" cy="30.5" rx="0.7" ry="0.5" fill="#6a7058" opacity="0.53"/><ellipse cx="20.7" cy="34.1" rx="0.9" ry="0.4" fill="#e0d8d8" opacity="0.81"/><ellipse cx="26.8" cy="35.2" rx="0.8" ry="0.5" fill="#6a7058" opacity="0.77"/><ellipse cx="19.0" cy="36.1" rx="0.5" ry="0.4" fill="#5a5058" opacity="0.66"/><ellipse cx="13.1" cy="32.6" rx="1.1" ry="0.5" fill="#d0c4c8" opacity="0.62"/><ellipse cx="10.6" cy="29.9" rx="1.2" ry="0.5" fill="#5a5058" opacity="0.54"/><ellipse cx="12.5" cy="34.6" rx="0.6" ry="0.4" fill="#8a8488" opacity="0.7"/><ellipse cx="51.4" cy="34.2" rx="0.8" ry="0.4" fill="#8a8488" opacity="0.67"/><ellipse cx="18.9" cy="28.2" rx="1.3" ry="0.8" fill="#b89c9c" opacity="0.9"/><ellipse cx="10.8" cy="27.2" rx="1.3" ry="0.7" fill="#e0d8d8" opacity="0.54"/><ellipse cx="51.6" cy="27.6" rx="0.7" ry="0.4" fill="#b89c9c" opacity="0.83"/><ellipse cx="26.2" cy="25.9" rx="0.7" ry="0.4" fill="#d0c4c8" opacity="0.74"/><ellipse cx="25.6" cy="30.4" rx="1.3" ry="0.7" fill="#e0d8d8" opacity="0.55"/><ellipse cx="26.2" cy="32.5" rx="0.7" ry="0.4" fill="#e0d8d8" opacity="0.6"/><ellipse cx="18.0" cy="33.9" rx="1.3" ry="0.5" fill="#8a8488" opacity="0.85"/><ellipse cx="35.3" cy="30.1" rx="0.6" ry="0.4" fill="#b89c9c" opacity="0.6"/><ellipse cx="39.6" cy="28.1" rx="1.2" ry="0.6" fill="#b89c9c" opacity="0.71"/><ellipse cx="49.0" cy="36.7" rx="0.6" ry="0.4" fill="#5a5058" opacity="0.84"/><ellipse cx="35.8" cy="28.4" rx="1.2" ry="0.5" fill="#d0c4c8" opacity="0.53"/><ellipse cx="27.3" cy="28.0" rx="0.5" ry="0.4" fill="#e0d8d8" opacity="0.73"/><ellipse cx="15.5" cy="29.3" rx="1.2" ry="0.8" fill="#5a5058" opacity="0.79"/><ellipse cx="31.9" cy="36.4" rx="1.0" ry="0.6" fill="#8a8488" opacity="0.86"/><ellipse cx="39.4" cy="36.6" rx="0.5" ry="0.4" fill="#8a8488" opacity="0.53"/><ellipse cx="23.1" cy="26.6" rx="0.6" ry="0.4" fill="#b89c9c" opacity="0.79"/><ellipse cx="47.8" cy="33.8" rx="1.1" ry="0.7" fill="#b89c9c" opacity="0.64"/><ellipse cx="38.8" cy="35.8" rx="1.2" ry="0.6" fill="#6a7058" opacity="0.51"/><ellipse cx="31.0" cy="25.2" rx="1.0" ry="0.5" fill="#d0c4c8" opacity="0.74"/><ellipse cx="13.4" cy="32.7" rx="1.3" ry="0.8" fill="#5a5058" opacity="0.63"/><rect x="-2" y="35.5" width="70" height="3" fill="#3a3430" opacity="0.8"/><path d="M33 15v17M30 17.5h6" fill="none" stroke="#36405a" stroke-width="1.2"/><ellipse cx="33" cy="32" rx="1.4" ry="2" fill="#3c3438"/><path d="M-2 14q6 4 9 9t8 9v8H-2z" fill="#12180f"/><ellipse cx="10" cy="32" rx="6" ry="5" fill="#223218"/><ellipse cx="3" cy="24" rx="4" ry="5" fill="#1c2814" opacity="0.9"/><path d="M67 6q-9 0-12 9t-4 14q2 6 4 10H67z" fill="#1a2616"/><ellipse cx="58" cy="15" rx="5" ry="6" fill="#30442a" opacity="0.85"/><ellipse cx="56" cy="31" rx="4" ry="5" fill="#38202a" opacity="0.7"/><ellipse cx="62" cy="24" rx="4" ry="5" fill="#24341c" opacity="0.8"/></g></svg>
<span class="t" style="left:240px;top:282.20px;font-size:13.1px;line-height:16px;color:#b0b0b0;transform:scaleX(0.8690);">CrossGuateTL</span>
<span class="t" style="left:517px;top:282.20px;font-size:13.1px;line-height:16px;color:#b0b0b0;transform:scaleX(0.9252);">00:00:02:05</span>
<span class="t" style="left:652px;top:282.20px;font-size:13.1px;line-height:16px;color:#b0b0b0;transform:scaleX(0.8800);">2021-06-08 21:22:04</span>
<span class="t" style="left:844px;top:282.20px;font-size:13.1px;line-height:16px;color:#b0b0b0;transform:scaleX(0.8910);">640x360 (1.0)</span>
<span class="t" style="left:1026px;top:282.20px;font-size:13.1px;line-height:16px;color:#b0b0b0;transform:scaleX(0.8541);">23.98</span>
<div style="position:absolute;left:0;top:323px;width:1405px;height:2px;background:#2e2e2e"></div>
<svg style="position:absolute;left:25px;top:352px" width="14" height="14" viewBox="0 0 14 14"><rect x="1" y="1" width="12" height="12" rx="1.500" fill="#202020" stroke="#b0b0b0" stroke-width="2"/></svg>
<svg style="position:absolute;left:77px;top:340px" width="65" height="38" viewBox="0 0 65 38" preserveAspectRatio="none"><defs><linearGradient id="g6" x1="0" y1="0" x2="0" y2="1"><stop offset="0" stop-color="#2276c6"/><stop offset="0.28" stop-color="#3586cc"/><stop offset="0.37" stop-color="#4a86b6"/><stop offset="0.42" stop-color="#8ca6be"/><stop offset="0.6" stop-color="#8c9eae"/><stop offset="0.8" stop-color="#5c666a"/><stop offset="1" stop-color="#2a2e2a"/></linearGradient><filter id="b_t_lake" x="-20%" y="-20%" width="140%" height="140%" color-interpolation-filters="sRGB"><feGaussianBlur in="SourceGraphic" stdDeviation="0.5" result="b"/><feTurbulence type="fractalNoise" baseFrequency="0.22 0.3" numOctaves="3" seed="43" result="n"/><feColorMatrix in="n" type="matrix" values="0.8 0.8 0.8 0 -0.7  0.8 0.8 0.8 0 -0.7  0.8 0.8 0.8 0 -0.7  0 0 0 0 1" result="g"/><feComposite in="b" in2="g" operator="arithmetic" k1="0" k2="1" k3="0.16" k4="-0.080"/></filter></defs><g filter="url(#b_t_lake)"><rect x="-3" y="-3" width="71" height="44" fill="url(#g6)"/><ellipse cx="20" cy="2.5" rx="14" ry="2.8" fill="#eae6ec"/><ellipse cx="26" cy="5" rx="7" ry="2" fill="#e8d0d4" opacity="0.8"/><ellipse cx="14" cy="10" rx="8" ry="3" fill="#f2f2f6"/><ellipse cx="20" cy="12" rx="10" ry="1.6" fill="#e8eef4" opacity="0.9"/><ellipse cx="46" cy="8" rx="4" ry="3" fill="#f6f6f8"/><ellipse cx="47" cy="11" rx="5" ry="1.4" fill="#e8eef2" opacity="0.8"/><ellipse cx="32" cy="13" rx="8" ry="1.4" fill="#dce4ee" opacity="0.9"/><ellipse cx="60" cy="12.5" rx="6" ry="1.4" fill="#e2eaf2" opacity="0.85"/><ellipse cx="4" cy="12.5" rx="5" ry="1.4" fill="#eaf0f6" opacity="0.85"/><ellipse cx="58" cy="5" rx="5" ry="1.5" fill="#5a9cd8" opacity="0.6"/><path d="M0 14.5q8-3 14-1t12 1.5H0z" fill="#34547e" opacity="0.95"/><rect x="-2" y="14" width="70" height="1" fill="#5a7ea4" opacity="0.7"/><rect x="38" y="15" width="30" height="11" fill="#3a82b6" opacity="0.8"/><ellipse cx="14" cy="20" rx="9" ry="4" fill="#b4bcc8" opacity="0.75"/><ellipse cx="46" cy="17" rx="4" ry="2.4" fill="#e8ecf0" opacity="0.8"/><ellipse cx="10" cy="26" rx="10" ry="3" fill="#9aa6b0" opacity="0.5"/><path d="M20 40q3-10 9-14t13-6q8 0 12 5t8 6q3 2 5 4v5z" fill="#46561a"/><path d="M42 30L28 22M42 30L34 20M42 30L42 19M42 30L50 21M42 30L56 25M42 30L26 28M42 30l16 2" fill="none" stroke="#7c8a2c" stroke-width="1.4"/><ellipse cx="42" cy="29" rx="6" ry="4" fill="#5e6c20" opacity="0.9"/><ellipse cx="40" cy="32" rx="3" ry="2" fill="#ccc45c" opacity="0.95"/><ellipse cx="50" cy="29" rx="3" ry="1.6" fill="#b8b852" opacity="0.85"/><ellipse cx="42" cy="35.5" rx="5" ry="2.6" fill="#181c0a" opacity="0.95"/><ellipse cx="58" cy="33" rx="6" ry="2" fill="#7c8232" opacity="0.8"/><ellipse cx="30" cy="35" rx="5" ry="2" fill="#5a6420" opacity="0.8"/></g></svg>
<span class="t" style="left:240px;top:352.20px;font-size:13.1px;line-height:16px;color:#b0b0b0;transform:scaleX(0.9323);">DockAtitlanTL</span>
<span class="t" style="left:517px;top:352.20px;font-size:13.1px;line-height:16px;color:#b0b0b0;transform:scaleX(0.9252);">00:00:02:03</span>
<span class="t" style="left:652px;top:352.20px;font-size:13.1px;line-height:16px;color:#b0b0b0;transform:scaleX(0.8800);">2021-06-08 21:22:04</span>
<span class="t" style="left:844px;top:352.20px;font-size:13.1px;line-height:16px;color:#b0b0b0;transform:scaleX(0.8910);">640x360 (1.0)</span>
<span class="t" style="left:1026px;top:352.20px;font-size:13.1px;line-height:16px;color:#b0b0b0;transform:scaleX(0.8541);">23.98</span>
<div style="position:absolute;left:0;top:393px;width:1405px;height:2px;background:#2e2e2e"></div>
<svg style="position:absolute;left:25px;top:422px" width="14" height="14" viewBox="0 0 14 14"><rect x="1" y="1" width="12" height="12" rx="1.500" fill="#202020" stroke="#b0b0b0" stroke-width="2"/></svg>
<svg style="position:absolute;left:77px;top:410px" width="65" height="38" viewBox="0 0 65 38" preserveAspectRatio="none"><defs><linearGradient id="g7" x1="0" y1="0" x2="0" y2="1"><stop offset="0" stop-color="#c2c2ca"/><stop offset="0.15" stop-color="#b2b2ba"/><stop offset="0.28" stop-color="#c8c8cc"/><stop offset="0.36" stop-color="#9ca8ac"/><stop offset="0.46" stop-color="#4c5c60"/><stop offset="0.56" stop-color="#867e74"/><stop offset="1" stop-color="#88847e"/></linearGradient><filter id="b_t_fog" x="-20%" y="-20%" width="140%" height="140%" color-interpolation-filters="sRGB"><feGaussianBlur in="SourceGraphic" stdDeviation="0.5" result="b"/><feTurbulence type="fractalNoise" baseFrequency="0.22 0.3" numOctaves="3" seed="43" result="n"/><feColorMatrix in="n" type="matrix" values="0.8 0.8 0.8 0 -0.7  0.8 0.8 0.8 0 -0.7  0.8 0.8 0.8 0 -0.7  0 0 0 0 1" result="g"/><feComposite in="b" in2="g" operator="arithmetic" k1="0" k2="1" k3="0.16" k4="-0.080"/></filter></defs><g filter="url(#b_t_fog)"><rect x="-3" y="-3" width="71" height="44" fill="url(#g7)"/><ellipse cx="20" cy="5" rx="16" ry="3" fill="#dadade" opacity="0.85"/><ellipse cx="50" cy="8" rx="12" ry="3" fill="#d6d6da" opacity="0.8"/><ellipse cx="34" cy="2" rx="10" ry="2" fill="#a8a8b0" opacity="0.7"/><ellipse cx="8" cy="9" rx="8" ry="2" fill="#d0d0d6" opacity="0.7"/><path d="M-2 13q6 0 10 3t12 0q8-2 16 0t12-2q8-4 19-4v11H-2z" fill="#485a5e"/><path d="M44 17q8-6 23-7v9H44z" fill="#525e3a" opacity="0.95"/><ellipse cx="20" cy="15" rx="8" ry="1.5" fill="#8ca0a8" opacity="0.7"/><ellipse cx="10" cy="18" rx="6" ry="1.5" fill="#3a4a54" opacity="0.8"/><ellipse cx="10" cy="24" rx="10" ry="3" fill="#6a7a36" opacity="0.85"/><ellipse cx="52" cy="20" rx="8" ry="2" fill="#cc6e5e" opacity="0.85"/><ellipse cx="38" cy="24" rx="6" ry="2" fill="#b86652" opacity="0.75"/><ellipse cx="30" cy="22" rx="4" ry="2" fill="#e4e0d8" opacity="0.85"/><ellipse cx="22" cy="20" rx="5" ry="1.5" fill="#d0ccc4" opacity="0.7"/><ellipse cx="17.1" cy="33.0" rx="1.3" ry="0.9" fill="#d8d0c4" opacity="0.79"/><ellipse cx="44.0" cy="35.9" rx="1.2" ry="0.6" fill="#c8c4c4" opacity="0.74"/><ellipse cx="14.1" cy="26.7" rx="1.0" ry="0.7" fill="#7a7274" opacity="0.95"/><ellipse cx="55.1" cy="23.4" rx="1.4" ry="1.0" fill="#a89c94" opacity="0.87"/><ellipse cx="49.2" cy="37.2" rx="1.4" ry="0.7" fill="#5a5050" opacity="0.72"/><ellipse cx="49.8" cy="31.0" rx="1.0" ry="0.5" fill="#8a5a50" opacity="0.79"/><ellipse cx="43.2" cy="27.5" rx="1.2" ry="0.8" fill="#a89c94" opacity="0.81"/><ellipse cx="36.6" cy="34.0" rx="0.7" ry="0.5" fill="#4a4444" opacity="0.74"/><ellipse cx="19.4" cy="24.9" rx="1.0" ry="0.5" fill="#a89c94" opacity="0.77"/><ellipse cx="26.1" cy="24.1" rx="1.1" ry="0.6" fill="#5a5050" opacity="0.9"/><ellipse cx="46.3" cy="24.1" rx="1.0" ry="0.6" fill="#4a4444" opacity="0.68"/><ellipse cx="47.4" cy="36.9" rx="0.6" ry="0.4" fill="#4a4444" opacity="0.79"/><ellipse cx="10.5" cy="28.6" rx="1.5" ry="1.1" fill="#e0dcd8" opacity="0.59"/><ellipse cx="56.3" cy="28.0" rx="1.3" ry="0.6" fill="#5a5050" opacity="0.83"/><ellipse cx="14.0" cy="31.9" rx="1.2" ry="0.8" fill="#e0dcd8" opacity="0.76"/><ellipse cx="37.6" cy="24.9" rx="0.8" ry="0.6" fill="#c8c4c4" opacity="0.91"/><ellipse cx="11.0" cy="28.9" rx="1.2" ry="0.8" fill="#7a7274" opacity="0.94"/><ellipse cx="54.5" cy="32.3" rx="1.1" ry="0.5" fill="#a89c94" opacity="0.55"/><ellipse cx="19.9" cy="26.3" rx="1.2" ry="0.5" fill="#4a4444" opacity="0.73"/><ellipse cx="56.2" cy="22.6" rx="0.9" ry="0.4" fill="#4a4444" opacity="0.6"/><ellipse cx="13.7" cy="34.8" rx="1.0" ry="0.7" fill="#d8d0c4" opacity="0.83"/><ellipse cx="17.0" cy="32.9" rx="1.4" ry="0.7" fill="#5a5050" opacity="0.66"/><ellipse cx="16.1" cy="26.6" rx="0.8" ry="0.4" fill="#7a7274" opacity="0.64"/><ellipse cx="30.4" cy="23.1" rx="0.6" ry="0.4" fill="#a89c94" opacity="0.59"/><ellipse cx="31.7" cy="30.9" rx="0.9" ry="0.5" fill="#8a5a50" opacity="0.93"/><ellipse cx="9.8" cy="22.8" rx="1.0" ry="0.5" fill="#a89c94" opacity="0.64"/><ellipse cx="25.6" cy="22.5" rx="0.7" ry="0.4" fill="#4a4444" opacity="0.76"/><ellipse cx="38.5" cy="28.9" rx="1.0" ry="0.5" fill="#7a7274" opacity="0.65"/><ellipse cx="58.9" cy="30.7" rx="0.7" ry="0.4" fill="#5a5050" opacity="0.91"/><ellipse cx="45.0" cy="23.4" rx="1.5" ry="0.7" fill="#a89c94" opacity="0.86"/><ellipse cx="14.1" cy="33.5" rx="1.3" ry="1.0" fill="#4a4444" opacity="0.59"/><ellipse cx="25.9" cy="22.9" rx="1.1" ry="0.5" fill="#d8d0c4" opacity="0.92"/><ellipse cx="50.2" cy="27.9" rx="1.0" ry="0.5" fill="#a89c94" opacity="0.62"/><ellipse cx="24.6" cy="36.9" rx="0.8" ry="0.4" fill="#a89c94" opacity="0.89"/><ellipse cx="66.0" cy="34.9" rx="1.0" ry="0.6" fill="#a89c94" opacity="0.91"/><ellipse cx="2.7" cy="23.5" rx="1.0" ry="0.6" fill="#8a5a50" opacity="0.62"/><ellipse cx="51.8" cy="29.2" rx="0.6" ry="0.4" fill="#a89c94" opacity="0.62"/><ellipse cx="14.9" cy="37.9" rx="1.6" ry="1.2" fill="#e0dcd8" opacity="0.69"/><ellipse cx="65.6" cy="34.2" rx="1.1" ry="0.6" fill="#4a4444" opacity="0.76"/><ellipse cx="63.2" cy="29.4" rx="1.4" ry="0.9" fill="#5a5050" opacity="0.51"/><ellipse cx="58" cy="33" rx="8" ry="6" fill="#5a6e26"/><ellipse cx="50" cy="30" rx="4" ry="3" fill="#6c5c3c" opacity="0.7"/><ellipse cx="38" cy="35" rx="6" ry="3" fill="#8c865a" opacity="0.8"/><ellipse cx="62" cy="36" rx="4" ry="3" fill="#7a9430" opacity="0.8"/><ellipse cx="20" cy="36" rx="8" ry="2" fill="#b8b4b8" opacity="0.7"/></g></svg>
<span class="t" style="left:240px;top:422.20px;font-size:13.1px;line-height:16px;color:#b0b0b0;transform:scaleX(0.8456);">FogTL</span>
<span class="t" style="left:517px;top:422.20px;font-size:13.1px;line-height:16px;color:#b0b0b0;transform:scaleX(0.8385);">00:00:14:13</span>
<span class="t" style="left:652px;top:422.20px;font-size:13.1px;line-height:16px;color:#b0b0b0;transform:scaleX(0.8800);">2021-06-08 21:22:04</span>
<span class="t" style="left:844px;top:422.20px;font-size:13.1px;line-height:16px;color:#b0b0b0;transform:scaleX(0.8910);">640x360 (1.0)</span>
<span class="t" style="left:1026px;top:422.20px;font-size:13.1px;line-height:16px;color:#b0b0b0;transform:scaleX(0.8541);">23.98</span>
<div style="position:absolute;left:0;top:464px;width:1405px;height:70px;background:#1f2832"></div>
<div style="position:absolute;left:79px;top:467px;width:64px;height:64px;background:#1d1d1e"></div>
<div style="position:absolute;left:0;top:463px;width:1405px;height:2px;background:#2f3236"></div>
<svg style="position:absolute;left:25px;top:492px" width="14" height="14" viewBox="0 0 14 14"><rect width="14" height="14" rx="2" fill="#bdbdbd"/><path d="M3.200 7.200l2.600 2.700 5-5.600" fill="none" stroke="#1c1c1c" stroke-width="2"/></svg>
<svg style="position:absolute;left:77px;top:480px" width="65" height="38" viewBox="0 0 65 38" preserveAspectRatio="none"><defs><linearGradient id="g8" x1="0" y1="0" x2="0" y2="1"><stop offset="0" stop-color="#2e34b4"/><stop offset="0.3" stop-color="#2a3ac6"/><stop offset="0.56" stop-color="#2232a6"/><stop offset="0.62" stop-color="#c49cb0"/><stop offset="0.68" stop-color="#c8a89c"/><stop offset="0.74" stop-color="#4a3820"/><stop offset="0.8" stop-color="#241f12"/><stop offset="1" stop-color="#18180e"/></linearGradient><filter id="b_t_roof" x="-20%" y="-20%" width="140%" height="140%" color-interpolation-filters="sRGB"><feGaussianBlur in="SourceGraphic" stdDeviation="0.5" result="b"/><feTurbulence type="fractalNoise" baseFrequency="0.22 0.3" numOctaves="3" seed="68" result="n"/><feColorMatrix in="n" type="matrix" values="0.8 0.8 0.8 0 -0.7  0.8 0.8 0.8 0 -0.7  0.8 0.8 0.8 0 -0.7  0 0 0 0 1" result="g"/><feComposite in="b" in2="g" operator="arithmetic" k1="0" k2="1" k3="0.16" k4="-0.080"/></filter></defs><g filter="url(#b_t_roof)"><rect x="-3" y="-3" width="71" height="44" fill="url(#g8)"/><ellipse cx="30" cy="11" rx="20" ry="12" fill="#6a4cc0" opacity="0.45"/><ellipse cx="28" cy="11" rx="12" ry="8" fill="#7a58c8" opacity="0.5"/><ellipse cx="26" cy="15" rx="7" ry="5" fill="#8860c8" opacity="0.4"/><ellipse cx="52" cy="14" rx="10" ry="9" fill="#1a46da" opacity="0.6"/><ellipse cx="26" cy="24.5" rx="14" ry="1.6" fill="#ecccd4" opacity="0.85"/><ellipse cx="44" cy="24.5" rx="8" ry="1.2" fill="#d8b0c0" opacity="0.7"/><path d="M-2 -2H67V4q-6-4-12-2t-14-2q-8 0-14 2t-12 0q-4 2-8 7l-7-2z" fill="#171a2a"/><ellipse cx="12" cy="5" rx="3" ry="2" fill="#141c30"/><ellipse cx="20" cy="6" rx="2" ry="1.5" fill="#141c30"/><ellipse cx="54" cy="3" rx="4" ry="2" fill="#1c1c30"/><path d="M-2 -2h7v42h-7z" fill="#121830"/><path d="M7 1L4 38" fill="none" stroke="#b89c64" stroke-width="1.8"/><path d="M9.5 6L7.5 38" fill="none" stroke="#6a5a3c" stroke-width="1"/><path d="M11 8q-1 8 0 14" fill="none" stroke="#2a3a8a" stroke-width="0.8"/><path d="M59 -2h8v42h-8z" fill="#1c1c36"/><path d="M57 0q3 14 2 20t3 18" fill="none" stroke="#caa272" stroke-width="2.4"/><path d="M60 18l3-4" fill="none" stroke="#b8905c" stroke-width="1.2"/><ellipse cx="18" cy="32" rx="8" ry="5" fill="#38381a"/><ellipse cx="36" cy="34" rx="10" ry="4" fill="#282a12"/><ellipse cx="30" cy="30" rx="4" ry="1.4" fill="#ccb464" opacity="0.8"/><ellipse cx="50" cy="32" rx="6" ry="4" fill="#22220e"/><ellipse cx="24" cy="35" rx="4" ry="1.4" fill="#7c7c2a" opacity="0.75"/><ellipse cx="40" cy="28" rx="6" ry="1.5" fill="#3a2c2c" opacity="0.8"/><ellipse cx="33.1" cy="36.1" rx="1.5" ry="1.1" fill="#6a6428" opacity="0.54"/><ellipse cx="9.3" cy="31.8" rx="1.3" ry="0.9" fill="#6a6428" opacity="0.76"/><ellipse cx="40.9" cy="35.2" rx="0.7" ry="0.6" fill="#1a1a0c" opacity="0.83"/><ellipse cx="50.0" cy="29.5" rx="1.2" ry="1.1" fill="#1a1a0c" opacity="0.63"/><ellipse cx="13.9" cy="35.2" rx="0.7" ry="0.6" fill="#2c3418" opacity="0.76"/><ellipse cx="36.8" cy="34.8" rx="1.0" ry="0.9" fill="#6a6428" opacity="0.51"/><ellipse cx="25.9" cy="28.5" rx="1.3" ry="1.0" fill="#2c3418" opacity="0.65"/><ellipse cx="45.2" cy="36.7" rx="0.8" ry="0.7" fill="#1a1a0c" opacity="0.71"/><ellipse cx="25.3" cy="30.7" rx="1.3" ry="0.9" fill="#1a1a0c" opacity="0.6"/><ellipse cx="22.8" cy="31.5" rx="0.8" ry="0.5" fill="#6a6428" opacity="0.63"/><ellipse cx="10.4" cy="37.9" rx="0.6" ry="0.6" fill="#2c3418" opacity="0.75"/><ellipse cx="43.0" cy="31.1" rx="0.7" ry="0.8" fill="#2c3418" opacity="0.51"/><ellipse cx="35.1" cy="34.9" rx="1.0" ry="1.0" fill="#2c3418" opacity="0.57"/><ellipse cx="55.8" cy="37.6" rx="1.2" ry="1.3" fill="#4a4a1c" opacity="0.84"/></g></svg>
<span class="t" style="left:240px;top:492.20px;font-size:13.1px;line-height:16px;color:#b0b0b0;transform:scaleX(0.9312);">RoofTL</span>
<span class="t" style="left:517px;top:492.20px;font-size:13.1px;line-height:16px;color:#b0b0b0;transform:scaleX(0.9397);">00:00:00:06</span>
<span class="t" style="left:652px;top:492.20px;font-size:13.1px;line-height:16px;color:#b0b0b0;transform:scaleX(0.8800);">2021-06-08 21:22:04</span>
<span class="t" style="left:844px;top:492.20px;font-size:13.1px;line-height:16px;color:#b0b0b0;transform:scaleX(0.8910);">640x360 (1.0)</span>
<span class="t" style="left:1026px;top:492.20px;font-size:13.1px;line-height:16px;color:#b0b0b0;transform:scaleX(0.8541);">23.98</span>
<div style="position:absolute;left:0;top:534px;width:1405px;height:70px;background:#1f2832"></div>
<div style="position:absolute;left:79px;top:537px;width:64px;height:64px;background:#1d1d1e"></div>
<div style="position:absolute;left:0;top:533px;width:1405px;height:2px;background:#2a323d"></div>
<svg style="position:absolute;left:25px;top:562px" width="14" height="14" viewBox="0 0 14 14"><rect width="14" height="14" rx="2" fill="#bdbdbd"/><path d="M3.200 7.200l2.600 2.700 5-5.600" fill="none" stroke="#1c1c1c" stroke-width="2"/></svg>
<svg style="position:absolute;left:77px;top:550px" width="65" height="38" viewBox="0 0 65 38" preserveAspectRatio="none"><defs><linearGradient id="g9" x1="0" y1="0" x2="0" y2="1"><stop offset="0" stop-color="#d2d6de"/><stop offset="0.1" stop-color="#e2e2e4"/><stop offset="0.42" stop-color="#e6e4e2"/><stop offset="0.46" stop-color="#8094a4"/><stop offset="0.52" stop-color="#5a7480"/><stop offset="0.56" stop-color="#2e481c"/><stop offset="1" stop-color="#34501a"/></linearGradient><filter id="b_t_stars" x="-20%" y="-20%" width="140%" height="140%" color-interpolation-filters="sRGB"><feGaussianBlur in="SourceGraphic" stdDeviation="0.5" result="b"/><feTurbulence type="fractalNoise" baseFrequency="0.22 0.3" numOctaves="3" seed="90" result="n"/><feColorMatrix in="n" type="matrix" values="0.8 0.8 0.8 0 -0.7  0.8 0.8 0.8 0 -0.7  0.8 0.8 0.8 0 -0.7  0 0 0 0 1" result="g"/><feComposite in="b" in2="g" operator="arithmetic" k1="0" k2="1" k3="0.16" k4="-0.080"/></filter></defs><g filter="url(#b_t_stars)"><rect x="-3" y="-3" width="71" height="44" fill="url(#g9)"/><ellipse cx="30" cy="3" rx="10" ry="1.5" fill="#a6b2c2" opacity="0.75"/><ellipse cx="54" cy="3" rx="8" ry="1.5" fill="#a2aec2" opacity="0.75"/><ellipse cx="14" cy="8" rx="10" ry="2" fill="#f2f0ee" opacity="0.8"/><ellipse cx="40" cy="12" rx="12" ry="2" fill="#d8d4d0" opacity="0.6"/><ellipse cx="8" cy="2" rx="6" ry="1.2" fill="#c0c8d4" opacity="0.7"/><rect x="-2" y="17.5" width="70" height="2.5" fill="#6a8494" opacity="0.8"/><rect x="44" y="15.5" width="3.6" height="6.5" fill="#566474"/><rect x="44.5" y="17" width="2.6" height="2" fill="#3c4858"/><rect x="22" y="18" width="2.6" height="2.2" fill="#485858"/><rect x="9" y="18.5" width="1.6" height="1.6" fill="#4c5c5c"/><ellipse cx="44.4" cy="34.6" rx="1.3" ry="0.8" fill="#12200c" opacity="0.66"/><ellipse cx="34.5" cy="31.4" rx="1.4" ry="0.6" fill="#12200c" opacity="0.65"/><ellipse cx="17.0" cy="23.7" rx="1.1" ry="0.6" fill="#182810" opacity="0.9"/><ellipse cx="60.7" cy="23.8" rx="1.2" ry="0.9" fill="#4a6826" opacity="0.86"/><ellipse cx="26.8" cy="23.6" rx="1.5" ry="1.0" fill="#12200c" opacity="0.7"/><ellipse cx="65.3" cy="31.1" rx="1.3" ry="0.6" fill="#12200c" opacity="0.6"/><ellipse cx="35.5" cy="33.7" rx="1.6" ry="0.9" fill="#6c8834" opacity="0.56"/><ellipse cx="32.1" cy="30.8" rx="1.2" ry="0.9" fill="#7c9440" opacity="0.77"/><ellipse cx="33.9" cy="35.2" rx="1.2" ry="0.7" fill="#6c8834" opacity="0.9"/><ellipse cx="15.4" cy="22.4" rx="1.1" ry="0.5" fill="#4e6c22" opacity="0.92"/><ellipse cx="30.9" cy="29.2" rx="1.0" ry="0.5" fill="#7c9440" opacity="0.64"/><ellipse cx="44.4" cy="22.7" rx="0.9" ry="0.6" fill="#12200c" opacity="0.55"/><ellipse cx="3.5" cy="30.1" rx="1.4" ry="0.6" fill="#12200c" opacity="0.79"/><ellipse cx="4.1" cy="24.0" rx="1.2" ry="0.9" fill="#4a6826" opacity="0.59"/><ellipse cx="30.5" cy="38.0" rx="1.6" ry="0.9" fill="#6c8834" opacity="0.5"/><ellipse cx="24.8" cy="32.4" rx="1.7" ry="1.3" fill="#304c18" opacity="0.93"/><ellipse cx="13.1" cy="30.1" rx="0.8" ry="0.6" fill="#182810" opacity="0.53"/><ellipse cx="18.7" cy="29.5" rx="1.3" ry="1.0" fill="#4e6c22" opacity="0.75"/><ellipse cx="47.0" cy="33.8" rx="1.0" ry="0.7" fill="#4e6c22" opacity="0.79"/><ellipse cx="37.1" cy="35.2" rx="1.7" ry="1.2" fill="#182810" opacity="0.57"/><ellipse cx="29.7" cy="36.9" rx="1.3" ry="0.9" fill="#4e6c22" opacity="0.82"/><ellipse cx="45.6" cy="33.0" rx="1.1" ry="0.5" fill="#304c18" opacity="0.94"/><ellipse cx="5.3" cy="32.7" rx="1.3" ry="0.7" fill="#263c16" opacity="0.89"/><ellipse cx="5.3" cy="29.0" rx="1.2" ry="0.8" fill="#263c16" opacity="0.63"/><ellipse cx="17.4" cy="37.6" rx="1.1" ry="0.8" fill="#6c8834" opacity="0.71"/><ellipse cx="46.9" cy="23.7" rx="1.4" ry="0.6" fill="#263c16" opacity="0.76"/><ellipse cx="2.1" cy="32.9" rx="1.4" ry="0.7" fill="#263c16" opacity="0.62"/><ellipse cx="8.9" cy="26.6" rx="1.3" ry="0.7" fill="#4a6826" opacity="0.81"/><ellipse cx="19.8" cy="28.5" rx="0.9" ry="0.6" fill="#4a6826" opacity="0.8"/><ellipse cx="16.3" cy="27.5" rx="1.7" ry="0.8" fill="#7c9440" opacity="0.9"/><ellipse cx="3.0" cy="35.6" rx="1.2" ry="0.9" fill="#4a6826" opacity="0.72"/><ellipse cx="24.9" cy="26.5" rx="1.1" ry="0.8" fill="#263c16" opacity="0.74"/><ellipse cx="0.8" cy="25.6" rx="1.0" ry="0.5" fill="#12200c" opacity="0.69"/><ellipse cx="8.1" cy="30.5" rx="0.9" ry="0.4" fill="#7c9440" opacity="0.54"/><ellipse cx="49.7" cy="29.0" rx="0.8" ry="0.5" fill="#263c16" opacity="0.83"/><ellipse cx="55.4" cy="37.0" rx="1.0" ry="0.6" fill="#12200c" opacity="0.62"/><ellipse cx="30.1" cy="34.9" rx="0.9" ry="0.4" fill="#263c16" opacity="0.62"/><ellipse cx="51.6" cy="29.8" rx="1.4" ry="0.8" fill="#4e6c22" opacity="0.58"/><ellipse cx="3.7" cy="36.9" rx="0.7" ry="0.4" fill="#4a6826" opacity="0.74"/><ellipse cx="3.2" cy="22.6" rx="1.6" ry="1.1" fill="#4e6c22" opacity="0.67"/><ellipse cx="21.6" cy="37.1" rx="0.8" ry="0.5" fill="#263c16" opacity="0.66"/><ellipse cx="11.1" cy="32.2" rx="1.2" ry="0.6" fill="#7c9440" opacity="0.55"/><ellipse cx="64.9" cy="34.5" rx="0.9" ry="0.6" fill="#4e6c22" opacity="0.84"/><ellipse cx="24.9" cy="22.3" rx="1.3" ry="0.9" fill="#263c16" opacity="0.95"/><ellipse cx="51.8" cy="25.6" rx="1.4" ry="0.7" fill="#6c8834" opacity="0.79"/><ellipse cx="10.4" cy="30.6" rx="1.6" ry="0.8" fill="#4a6826" opacity="0.57"/><ellipse cx="31.7" cy="36.5" rx="1.2" ry="0.7" fill="#12200c" opacity="0.66"/><ellipse cx="11.7" cy="30.3" rx="1.4" ry="0.9" fill="#182810" opacity="0.91"/><ellipse cx="54.7" cy="22.7" rx="1.0" ry="0.5" fill="#12200c" opacity="0.71"/><ellipse cx="45.1" cy="33.1" rx="1.3" ry="0.9" fill="#12200c" opacity="0.73"/><ellipse cx="0.6" cy="31.1" rx="1.4" ry="0.8" fill="#4e6c22" opacity="0.73"/><ellipse cx="58.9" cy="31.0" rx="1.7" ry="1.0" fill="#12200c" opacity="0.84"/><ellipse cx="20.1" cy="29.7" rx="1.6" ry="1.0" fill="#12200c" opacity="0.57"/><ellipse cx="46.0" cy="28.3" rx="0.9" ry="0.7" fill="#4a6826" opacity="0.84"/><ellipse cx="55.5" cy="32.7" rx="1.2" ry="0.7" fill="#4a6826" opacity="0.73"/><ellipse cx="60.7" cy="29.7" rx="0.9" ry="0.6" fill="#263c16" opacity="0.92"/><ellipse cx="31.3" cy="27.3" rx="1.7" ry="0.8" fill="#4e6c22" opacity="0.56"/><ellipse cx="17.9" cy="27.3" rx="1.3" ry="0.7" fill="#12200c" opacity="0.92"/><ellipse cx="43.9" cy="34.7" rx="1.3" ry="0.6" fill="#6c8834" opacity="0.95"/><ellipse cx="-0.1" cy="24.1" rx="1.4" ry="1.0" fill="#4a6826" opacity="0.66"/><ellipse cx="12" cy="30" rx="6" ry="2.4" fill="#1e2e1a" opacity="0.9"/><ellipse cx="52" cy="30" rx="4" ry="2" fill="#223212" opacity="0.9"/><ellipse cx="46" cy="33" rx="4" ry="2.4" fill="#8aa444" opacity="0.7"/><ellipse cx="60" cy="33" rx="3.5" ry="2.4" fill="#94ac4c" opacity="0.7"/></g></svg>
<span class="t" style="left:240px;top:562.20px;font-size:13.1px;line-height:16px;color:#b0b0b0;transform:scaleX(0.8507);">StarsTL</span>
<span class="t" style="left:517px;top:562.20px;font-size:13.1px;line-height:16px;color:#b0b0b0;transform:scaleX(0.8819);">00:00:06:15</span>
<span class="t" style="left:652px;top:562.20px;font-size:13.1px;line-height:16px;color:#b0b0b0;transform:scaleX(0.8800);">2021-06-08 21:22:04</span>
<span class="t" style="left:844px;top:562.20px;font-size:13.1px;line-height:16px;color:#b0b0b0;transform:scaleX(0.8910);">640x360 (1.0)</span>
<span class="t" style="left:1026px;top:562.20px;font-size:13.1px;line-height:16px;color:#b0b0b0;transform:scaleX(0.8541);">23.98</span>
<div style="position:absolute;left:0;top:603px;width:1405px;height:2px;background:#2f3236"></div>
<svg style="position:absolute;left:25px;top:632px" width="14" height="14" viewBox="0 0 14 14"><rect x="1" y="1" width="12" height="12" rx="1.500" fill="#202020" stroke="#b0b0b0" stroke-width="2"/></svg>
<svg style="position:absolute;left:77px;top:620px" width="65" height="38" viewBox="0 0 65 38" preserveAspectRatio="none"><defs><linearGradient id="g10" x1="0" y1="0" x2="0" y2="1"><stop offset="0" stop-color="#5a94d4"/><stop offset="0.2" stop-color="#98b8dc"/><stop offset="0.4" stop-color="#d8e0e8"/><stop offset="0.5" stop-color="#5a6c4c"/><stop offset="0.65" stop-color="#6a7850"/><stop offset="1" stop-color="#8a9048"/></linearGradient><filter id="b_t_tikal" x="-20%" y="-20%" width="140%" height="140%" color-interpolation-filters="sRGB"><feGaussianBlur in="SourceGraphic" stdDeviation="0.5" result="b"/><feTurbulence type="fractalNoise" baseFrequency="0.22 0.3" numOctaves="3" seed="66" result="n"/><feColorMatrix in="n" type="matrix" values="0.8 0.8 0.8 0 -0.7  0.8 0.8 0.8 0 -0.7  0.8 0.8 0.8 0 -0.7  0 0 0 0 1" result="g"/><feComposite in="b" in2="g" operator="arithmetic" k1="0" k2="1" k3="0.16" k4="-0.080"/></filter></defs><g filter="url(#b_t_tikal)"><rect x="-3" y="-3" width="71" height="44" fill="url(#g10)"/><ellipse cx="12" cy="6" rx="10" ry="5" fill="#eef0f4"/><ellipse cx="44" cy="7" rx="12" ry="7" fill="#f4f4f6"/><ellipse cx="28" cy="12" rx="8" ry="4" fill="#d4dcec" opacity="0.8"/><ellipse cx="2" cy="2" rx="5" ry="3" fill="#3a84d0" opacity="0.85"/><ellipse cx="26" cy="3" rx="5" ry="2.5" fill="#4a86ca" opacity="0.85"/><ellipse cx="8" cy="13" rx="4" ry="2" fill="#5a8ccc" opacity="0.7"/><ellipse cx="34" cy="3" rx="3" ry="2" fill="#88acd8" opacity="0.7"/><path d="M-2 11q4 2 8 6t10 2q4-6 10-3t10 2q6-2 12 0l4 4v10H-2z" fill="#344c22"/><ellipse cx="24" cy="17" rx="4" ry="3" fill="#52683a"/><ellipse cx="10" cy="20" rx="5" ry="4" fill="#5c8228" opacity="0.85"/><ellipse cx="4" cy="15" rx="3" ry="4" fill="#2a3c1c" opacity="0.9"/><ellipse cx="34" cy="19" rx="4" ry="3" fill="#3a5428" opacity="0.9"/><ellipse cx="40.7" cy="25.4" rx="1.7" ry="1.1" fill="#30481e" opacity="0.67"/><ellipse cx="23.3" cy="15.6" rx="1.0" ry="0.8" fill="#54782c" opacity="0.75"/><ellipse cx="39.7" cy="15.3" rx="1.8" ry="1.5" fill="#24381a" opacity="0.71"/><ellipse cx="32.3" cy="18.3" rx="0.9" ry="0.9" fill="#30481e" opacity="0.76"/><ellipse cx="27.3" cy="25.6" rx="1.2" ry="1.2" fill="#30481e" opacity="0.89"/><ellipse cx="12.4" cy="25.7" rx="1.4" ry="1.4" fill="#54782c" opacity="0.79"/><ellipse cx="26.0" cy="19.4" rx="1.4" ry="1.0" fill="#54782c" opacity="0.71"/><ellipse cx="29.6" cy="20.2" rx="1.4" ry="0.9" fill="#6c8c32" opacity="0.52"/><ellipse cx="12.1" cy="20.9" rx="1.6" ry="1.2" fill="#30481e" opacity="0.86"/><ellipse cx="23.9" cy="24.7" rx="1.3" ry="0.9" fill="#54782c" opacity="0.54"/><ellipse cx="34.5" cy="22.5" rx="1.6" ry="1.2" fill="#54782c" opacity="0.87"/><ellipse cx="26.1" cy="25.3" rx="1.0" ry="1.1" fill="#24381a" opacity="0.75"/><ellipse cx="17.3" cy="16.0" rx="1.0" ry="0.6" fill="#54782c" opacity="0.82"/><ellipse cx="41.7" cy="20.5" rx="1.8" ry="1.8" fill="#30481e" opacity="0.51"/><ellipse cx="34.7" cy="19.9" rx="0.8" ry="0.6" fill="#54782c" opacity="0.8"/><ellipse cx="20.2" cy="17.5" rx="0.9" ry="0.8" fill="#54782c" opacity="0.78"/><path d="M43 26l2-13q2-2.5 4 0l2 13z" fill="#6a7282"/><rect x="45" y="15" width="3" height="2" fill="#565c6c"/><rect x="21" y="21" width="9" height="5" fill="#9892a0" opacity="0.85"/><rect x="23" y="22" width="4" height="3" fill="#6a6670" opacity="0.8"/><path d="M52 -2q-2 6 0 12t2 12q-2 8 4 18h9V-2z" fill="#223618"/><ellipse cx="58" cy="22" rx="4" ry="6" fill="#6a9034" opacity="0.85"/><ellipse cx="60" cy="6" rx="5" ry="5" fill="#486a32" opacity="0.75"/><ellipse cx="55" cy="12" rx="2" ry="4" fill="#9cb8c8" opacity="0.5"/><ellipse cx="63" cy="14" rx="3" ry="4" fill="#1c2c14" opacity="0.9"/><path d="M-2 24q10 2 18 6t14 10H-2z" fill="#8c8682"/><ellipse cx="8" cy="33" rx="8" ry="3" fill="#7a7470" opacity="0.8"/><path d="M18 30q8-5 22-4l10 1q4 4 4 13H30z" fill="#869634"/><ellipse cx="36" cy="30" rx="4" ry="2.5" fill="#586240" opacity="0.85"/><ellipse cx="52" cy="34" rx="4" ry="3" fill="#d6dea6" opacity="0.85"/><ellipse cx="62" cy="35" rx="4" ry="4" fill="#1a220a" opacity="0.9"/><ellipse cx="26" cy="34" rx="4" ry="2" fill="#d2d26a" opacity="0.75"/><ellipse cx="44" cy="34" rx="4" ry="2" fill="#7c9430" opacity="0.8"/><ellipse cx="40" cy="28" rx="3" ry="1.5" fill="#c8d068" opacity="0.7"/></g></svg>
<span class="t" style="left:240px;top:632.20px;font-size:13.1px;line-height:16px;color:#b0b0b0;transform:scaleX(0.8811);">TIkal</span>
<span class="t" style="left:517px;top:632.20px;font-size:13.1px;line-height:16px;color:#b0b0b0;transform:scaleX(0.9397);">00:00:03:00</span>
<span class="t" style="left:652px;top:632.20px;font-size:13.1px;line-height:16px;color:#b0b0b0;transform:scaleX(0.8800);">2021-06-08 21:22:04</span>
<span class="t" style="left:844px;top:632.20px;font-size:13.1px;line-height:16px;color:#b0b0b0;transform:scaleX(0.8910);">640x360 (1.0)</span>
<span class="t" style="left:1026px;top:632.20px;font-size:13.1px;line-height:16px;color:#b0b0b0;transform:scaleX(0.8541);">23.98</span>
<div style="position:absolute;left:0;top:0;width:1405px;height:1px;background:#2a323d"></div>
</div>
<div style="position:absolute;left:1663px;top:576px;width:11px;height:264px;background:#333333;border-radius:5px 5px 0 0;"></div>
<div style="position:absolute;left:1676px;top:68px;width:2px;height:772px;background:#111111;"></div>
<span class="t" style="left:1698px;top:94.50px;font-size:14.6px;line-height:18px;color:#e8e8e8;transform:scaleX(1.0238);">Import settings</span>
<svg style="position:absolute;left:1697px;top:151px" width="8" height="12" viewBox="0 0 8 12"><path d="M1.800 1.800L5.800 5.600l-4 3.800" fill="none" stroke="#c8c8c8" stroke-width="1.500"/></svg>
<span class="t" style="left:1716px;top:147.50px;font-size:12.8px;line-height:15px;color:#989898;transform:scaleX(0.9398);">Create new sequence</span>
<div style="position:absolute;left:1876px;top:148px;width:26px;height:14px;border-radius:7px;background:#2680eb"><div style="position:absolute;left:14px;top:2px;width:10px;height:10px;border-radius:5px;background:#1b1b1b"></div></div>
<div style="position:absolute;left:1682px;top:176px;width:1238px;height:1px;background:#141414;"></div>
<div style="position:absolute;left:0px;top:69px;width:1.5px;height:910px;background:#171717;"></div>
<div style="position:absolute;left:0px;top:840px;width:1920px;height:2px;background:#0c0c0c;"></div>
<div style="position:absolute;left:0px;top:842px;width:1920px;height:80px;background:#2a2a2a;"></div>
<div style="position:absolute;left:0px;top:921px;width:1920px;height:2px;background:#0c0c0c;"></div>
<svg style="position:absolute;left:7px;top:851px" width="52" height="52" viewBox="0 0 52 52" preserveAspectRatio="none"><defs><linearGradient id="g11" x1="0" y1="0" x2="0" y2="1"><stop offset="0" stop-color="#c2cadc"/><stop offset="0.2" stop-color="#dfe2ea"/><stop offset="0.42" stop-color="#d0d2da"/><stop offset="0.5" stop-color="#9096a4"/><stop offset="0.58" stop-color="#888886"/><stop offset="0.75" stop-color="#75746c"/><stop offset="1" stop-color="#8a8578"/></linearGradient><filter id="b_f_cross" x="-20%" y="-20%" width="140%" height="140%" color-interpolation-filters="sRGB"><feGaussianBlur in="SourceGraphic" stdDeviation="0.5" result="b"/><feTurbulence type="fractalNoise" baseFrequency="0.22 0.3" numOctaves="3" seed="73" result="n"/><feColorMatrix in="n" type="matrix" values="0.8 0.8 0.8 0 -0.7  0.8 0.8 0.8 0 -0.7  0.8 0.8 0.8 0 -0.7  0 0 0 0 1" result="g"/><feComposite in="b" in2="g" operator="arithmetic" k1="0" k2="1" k3="0.16" k4="-0.080"/></filter></defs><g filter="url(#b_f_cross)"><rect x="-3" y="-3" width="58" height="58" fill="url(#g11)"/><ellipse cx="6" cy="8" rx="8" ry="7" fill="#b2bacc" opacity="0.7"/><ellipse cx="40" cy="12" rx="10" ry="8" fill="#eeeff4" opacity="0.85"/><ellipse cx="22" cy="4" rx="10" ry="3" fill="#c8d0e0" opacity="0.7"/><ellipse cx="34" cy="22" rx="10" ry="3" fill="#e0e0e6" opacity="0.7"/><path d="M-2 23q6-2 12 0t16 2q10 0 20-2v7H-2z" fill="#888ea0" opacity="0.85"/><path d="M-2 26q8-2 14 0t12 1v4H-2z" fill="#6c7488" opacity="0.6"/><path d="M25 7v27M18 11.500h14" fill="none" stroke="#2a2a2e" stroke-width="1.3"/><path d="M54 12q-6 4-7 12t-2 10q2 6 6 8h3z" fill="#26341f"/><ellipse cx="49" cy="30" rx="3" ry="6" fill="#34442a" opacity="0.8"/><ellipse cx="5" cy="36" rx="6" ry="5" fill="#4a4a42"/><ellipse cx="25" cy="35" rx="3" ry="4" fill="#3a3e32"/><ellipse cx="14" cy="34" rx="6" ry="2" fill="#5c5c58" opacity="0.8"/><ellipse cx="28.6" cy="38.9" rx="2.2" ry="0.8" fill="#948a7c" opacity="0.74"/><ellipse cx="0.0" cy="32.6" rx="2.2" ry="1.0" fill="#948a7c" opacity="0.63"/><ellipse cx="25.9" cy="50.3" rx="1.7" ry="0.9" fill="#a09890" opacity="0.76"/><ellipse cx="8.2" cy="40.7" rx="1.5" ry="0.7" fill="#a09890" opacity="0.79"/><ellipse cx="21.8" cy="37.6" rx="2.0" ry="1.0" fill="#b0a8a0" opacity="0.78"/><ellipse cx="39.6" cy="47.1" rx="1.7" ry="0.8" fill="#5c5c52" opacity="0.89"/><ellipse cx="44.8" cy="49.9" rx="2.0" ry="1.0" fill="#6c7654" opacity="0.69"/><ellipse cx="36.2" cy="48.0" rx="1.7" ry="0.6" fill="#5c5c52" opacity="0.76"/><ellipse cx="49.5" cy="45.2" rx="1.3" ry="0.7" fill="#a09890" opacity="0.84"/><ellipse cx="-0.2" cy="47.1" rx="1.4" ry="0.6" fill="#6c7654" opacity="0.75"/><ellipse cx="14.7" cy="32.2" rx="2.2" ry="0.7" fill="#545244" opacity="0.87"/><ellipse cx="15.6" cy="32.1" rx="1.8" ry="0.9" fill="#545244" opacity="0.78"/><ellipse cx="-0.5" cy="35.5" rx="1.5" ry="0.5" fill="#545244" opacity="0.86"/><ellipse cx="12.9" cy="32.4" rx="1.1" ry="0.5" fill="#545244" opacity="0.83"/><ellipse cx="19.4" cy="36.5" rx="1.1" ry="0.6" fill="#a09890" opacity="0.93"/><ellipse cx="11.3" cy="48.5" rx="0.8" ry="0.4" fill="#3e3c36" opacity="0.71"/><ellipse cx="36.0" cy="47.7" rx="0.9" ry="0.4" fill="#3e3c36" opacity="0.8"/><ellipse cx="7.8" cy="40.2" rx="1.0" ry="0.4" fill="#5c5c52" opacity="0.77"/><ellipse cx="47.3" cy="45.2" rx="1.4" ry="0.5" fill="#948a7c" opacity="0.82"/><ellipse cx="20.8" cy="42.3" rx="0.9" ry="0.4" fill="#b0a8a0" opacity="0.92"/><ellipse cx="22.9" cy="36.4" rx="1.2" ry="0.6" fill="#6c7654" opacity="0.9"/><ellipse cx="26.7" cy="38.8" rx="1.1" ry="0.6" fill="#b0a8a0" opacity="0.62"/><ellipse cx="28.6" cy="51.4" rx="1.5" ry="0.6" fill="#8c8278" opacity="0.93"/><ellipse cx="11.5" cy="36.4" rx="1.1" ry="0.6" fill="#6c7654" opacity="0.85"/><ellipse cx="4.8" cy="37.0" rx="2.3" ry="0.7" fill="#948a7c" opacity="0.67"/><ellipse cx="43.4" cy="40.7" rx="2.3" ry="0.8" fill="#948a7c" opacity="0.71"/><ellipse cx="23.9" cy="36.2" rx="1.0" ry="0.4" fill="#8c8278" opacity="0.83"/><ellipse cx="2.9" cy="48.2" rx="1.0" ry="0.5" fill="#a09890" opacity="0.64"/><ellipse cx="13.9" cy="49.9" rx="2.0" ry="0.8" fill="#948a7c" opacity="0.86"/><ellipse cx="14.5" cy="34.1" rx="2.1" ry="1.0" fill="#5c5c52" opacity="0.73"/><ellipse cx="34.3" cy="39.3" rx="2.2" ry="0.7" fill="#948a7c" opacity="0.65"/><ellipse cx="27.5" cy="46.1" rx="1.6" ry="0.7" fill="#948a7c" opacity="0.94"/><ellipse cx="40.5" cy="46.1" rx="1.1" ry="0.4" fill="#b0a8a0" opacity="0.73"/><ellipse cx="26.7" cy="48.6" rx="1.1" ry="0.6" fill="#b0a8a0" opacity="0.85"/><ellipse cx="16.1" cy="37.9" rx="2.2" ry="0.8" fill="#a09890" opacity="0.89"/><ellipse cx="37.8" cy="36.9" rx="1.8" ry="0.8" fill="#3e3c36" opacity="0.95"/><ellipse cx="1.3" cy="34.1" rx="2.1" ry="1.0" fill="#545244" opacity="0.69"/><ellipse cx="39.0" cy="46.1" rx="1.8" ry="0.7" fill="#3e3c36" opacity="0.62"/><ellipse cx="3.9" cy="48.1" rx="1.0" ry="0.5" fill="#3e3c36" opacity="0.66"/><ellipse cx="19.6" cy="45.5" rx="2.0" ry="1.0" fill="#b0a8a0" opacity="0.66"/><ellipse cx="18.8" cy="35.1" rx="0.9" ry="0.4" fill="#5c5c52" opacity="0.6"/><ellipse cx="52.8" cy="45.6" rx="1.9" ry="0.9" fill="#948a7c" opacity="0.67"/><ellipse cx="51.3" cy="37.0" rx="1.2" ry="0.4" fill="#8c8278" opacity="0.72"/><ellipse cx="14.1" cy="47.0" rx="1.9" ry="0.8" fill="#6c7654" opacity="0.76"/><ellipse cx="26" cy="42" rx="8" ry="2.5" fill="#56544a" opacity="0.85"/><ellipse cx="40" cy="48" rx="10" ry="3" fill="#8e847a" opacity="0.7"/><ellipse cx="8" cy="49" rx="10" ry="2.6" fill="#7c8662" opacity="0.8"/></g></svg>
<svg style="position:absolute;left:63px;top:851px" width="52" height="52" viewBox="0 0 52 52" preserveAspectRatio="none"><defs><linearGradient id="g12" x1="0" y1="0" x2="0" y2="1"><stop offset="0" stop-color="#8a9ca4"/><stop offset="0.05" stop-color="#3a4c42"/><stop offset="0.2" stop-color="#34463a"/><stop offset="0.26" stop-color="#567888"/><stop offset="0.38" stop-color="#5a8094"/><stop offset="0.46" stop-color="#7c8a90"/><stop offset="0.6" stop-color="#8e8480"/><stop offset="1" stop-color="#80797c"/></linearGradient><filter id="b_f_town" x="-20%" y="-20%" width="140%" height="140%" color-interpolation-filters="sRGB"><feGaussianBlur in="SourceGraphic" stdDeviation="0.5" result="b"/><feTurbulence type="fractalNoise" baseFrequency="0.22 0.3" numOctaves="3" seed="72" result="n"/><feColorMatrix in="n" type="matrix" values="0.8 0.8 0.8 0 -0.7  0.8 0.8 0.8 0 -0.7  0.8 0.8 0.8 0 -0.7  0 0 0 0 1" result="g"/><feComposite in="b" in2="g" operator="arithmetic" k1="0" k2="1" k3="0.16" k4="-0.080"/></filter></defs><g filter="url(#b_f_town)"><rect x="-3" y="-3" width="58" height="58" fill="url(#g12)"/><ellipse cx="30" cy="7" rx="22" ry="3" fill="#485a52" opacity="0.75"/><ellipse cx="10" cy="4" rx="10" ry="2" fill="#54685a" opacity="0.7"/><ellipse cx="42" cy="9" rx="10" ry="2" fill="#34463c" opacity="0.8"/><ellipse cx="20" cy="1" rx="16" ry="1.2" fill="#a8b8c0" opacity="0.7"/><ellipse cx="12" cy="15" rx="14" ry="2" fill="#6c98ac" opacity="0.7"/><ellipse cx="40" cy="18" rx="12" ry="2" fill="#5a7e90" opacity="0.7"/><ellipse cx="40" cy="24" rx="10" ry="4" fill="#4c5e42" opacity="0.85"/><ellipse cx="36" cy="30" rx="6" ry="3" fill="#cac2be" opacity="0.7"/><ellipse cx="46" cy="27" rx="5" ry="3" fill="#566a48" opacity="0.8"/><ellipse cx="-0.3" cy="25.4" rx="1.1" ry="0.7" fill="#7a4a4c" opacity="0.99"/><ellipse cx="27.9" cy="43.3" rx="0.9" ry="0.7" fill="#d4d0cc" opacity="0.9"/><ellipse cx="6.4" cy="38.1" rx="1.2" ry="0.7" fill="#a06c64" opacity="0.73"/><ellipse cx="0.1" cy="50.2" rx="1.1" ry="0.5" fill="#4a4a4c" opacity="0.82"/><ellipse cx="31.2" cy="29.4" rx="1.5" ry="0.8" fill="#3c3c40" opacity="0.86"/><ellipse cx="50.5" cy="47.2" rx="1.1" ry="0.5" fill="#d0a08c" opacity="0.71"/><ellipse cx="38.7" cy="48.1" rx="1.4" ry="0.7" fill="#d0a08c" opacity="0.92"/><ellipse cx="9.5" cy="41.2" rx="0.9" ry="0.4" fill="#4a4a4c" opacity="0.79"/><ellipse cx="29.9" cy="36.5" rx="1.4" ry="0.7" fill="#b4c4d0" opacity="0.99"/><ellipse cx="52.6" cy="45.7" rx="1.0" ry="0.5" fill="#a06c64" opacity="0.98"/><ellipse cx="44.3" cy="30.9" rx="0.9" ry="0.4" fill="#a06c64" opacity="0.81"/><ellipse cx="50.7" cy="42.1" rx="1.0" ry="0.5" fill="#b4c4d0" opacity="0.73"/><ellipse cx="9.9" cy="32.0" rx="1.1" ry="0.5" fill="#f0ece8" opacity="0.74"/><ellipse cx="4.3" cy="51.5" rx="0.8" ry="0.4" fill="#4a4a4c" opacity="0.75"/><ellipse cx="52.5" cy="26.6" rx="0.8" ry="0.5" fill="#5a6a64" opacity="0.78"/><ellipse cx="19.1" cy="40.4" rx="1.4" ry="0.6" fill="#c09484" opacity="0.85"/><ellipse cx="42.1" cy="40.2" rx="1.2" ry="0.9" fill="#d4d0cc" opacity="0.78"/><ellipse cx="40.3" cy="51.6" rx="1.1" ry="0.5" fill="#d0a08c" opacity="0.87"/><ellipse cx="23.1" cy="51.8" rx="0.8" ry="0.5" fill="#a06c64" opacity="0.71"/><ellipse cx="32.2" cy="28.2" rx="0.9" ry="0.6" fill="#a0a0a0" opacity="0.91"/><ellipse cx="28.9" cy="38.8" rx="1.3" ry="0.9" fill="#5a6a64" opacity="0.82"/><ellipse cx="27.3" cy="43.5" rx="1.2" ry="0.8" fill="#e4e0dc" opacity="0.8"/><ellipse cx="19.1" cy="37.7" rx="1.1" ry="0.5" fill="#a0a0a0" opacity="0.91"/><ellipse cx="30.3" cy="27.0" rx="1.6" ry="0.7" fill="#d0a08c" opacity="0.76"/><ellipse cx="12.3" cy="48.5" rx="0.9" ry="0.7" fill="#a0a0a0" opacity="0.86"/><ellipse cx="12.1" cy="45.4" rx="1.5" ry="1.1" fill="#d4d0cc" opacity="0.84"/><ellipse cx="43.7" cy="30.2" rx="1.3" ry="0.7" fill="#f0ece8" opacity="0.81"/><ellipse cx="20.7" cy="46.5" rx="1.1" ry="0.5" fill="#b4c4d0" opacity="0.8"/><ellipse cx="15.0" cy="50.8" rx="0.8" ry="0.4" fill="#b4c4d0" opacity="0.97"/><ellipse cx="36.5" cy="48.6" rx="1.2" ry="0.8" fill="#3c3c40" opacity="0.75"/><ellipse cx="0.8" cy="36.5" rx="1.0" ry="0.6" fill="#d4d0cc" opacity="0.99"/><ellipse cx="14.0" cy="30.2" rx="1.0" ry="0.7" fill="#b4c4d0" opacity="0.87"/><ellipse cx="20.8" cy="45.3" rx="1.0" ry="0.6" fill="#3c3c40" opacity="0.86"/><ellipse cx="16.3" cy="24.9" rx="1.3" ry="0.6" fill="#4a4a4c" opacity="0.97"/><ellipse cx="25.6" cy="31.2" rx="1.2" ry="0.9" fill="#a0a0a0" opacity="0.79"/><ellipse cx="19.9" cy="42.3" rx="1.3" ry="0.6" fill="#d0a08c" opacity="0.71"/><ellipse cx="29.8" cy="50.8" rx="1.0" ry="0.7" fill="#d0a08c" opacity="0.91"/><ellipse cx="16.5" cy="51.5" rx="1.6" ry="0.7" fill="#b4c4d0" opacity="0.92"/><ellipse cx="40.1" cy="34.8" rx="1.5" ry="0.8" fill="#d4d0cc" opacity="0.98"/><ellipse cx="11.2" cy="47.8" rx="1.3" ry="0.6" fill="#e4e0dc" opacity="0.94"/><ellipse cx="22.8" cy="36.4" rx="1.2" ry="0.8" fill="#3c3c40" opacity="0.95"/><ellipse cx="38.3" cy="32.2" rx="0.9" ry="0.4" fill="#4a4a4c" opacity="0.72"/><ellipse cx="29.7" cy="49.3" rx="1.1" ry="0.6" fill="#d0a08c" opacity="0.77"/><ellipse cx="2.1" cy="48.1" rx="1.2" ry="0.9" fill="#d0a08c" opacity="0.84"/><ellipse cx="20.7" cy="46.5" rx="1.5" ry="1.1" fill="#f0ece8" opacity="0.85"/><ellipse cx="16.2" cy="29.2" rx="1.0" ry="0.5" fill="#d4d0cc" opacity="0.74"/><ellipse cx="30.6" cy="48.1" rx="1.7" ry="0.8" fill="#d0a08c" opacity="0.84"/><ellipse cx="13.8" cy="32.2" rx="1.7" ry="1.2" fill="#a0a0a0" opacity="0.88"/><ellipse cx="43.3" cy="34.6" rx="0.8" ry="0.5" fill="#a0a0a0" opacity="0.94"/><ellipse cx="51.1" cy="25.5" rx="1.6" ry="1.1" fill="#a0a0a0" opacity="0.78"/><ellipse cx="41.1" cy="35.0" rx="0.8" ry="0.4" fill="#5a6a64" opacity="0.96"/><ellipse cx="24.7" cy="26.3" rx="1.2" ry="0.6" fill="#a0a0a0" opacity="0.88"/><ellipse cx="15.9" cy="47.4" rx="1.3" ry="0.9" fill="#c09484" opacity="0.91"/><ellipse cx="44.6" cy="46.5" rx="1.5" ry="0.7" fill="#5a6a64" opacity="0.88"/><ellipse cx="40.4" cy="29.9" rx="1.3" ry="0.9" fill="#a06c64" opacity="0.83"/><ellipse cx="16.2" cy="40.2" rx="1.4" ry="1.0" fill="#3c3c40" opacity="0.88"/><ellipse cx="7.0" cy="51.1" rx="1.2" ry="0.7" fill="#f0ece8" opacity="0.96"/><ellipse cx="6.7" cy="35.6" rx="0.9" ry="0.5" fill="#7a4a4c" opacity="0.9"/><ellipse cx="30.6" cy="46.0" rx="1.2" ry="0.6" fill="#e4e0dc" opacity="0.8"/><ellipse cx="26.0" cy="41.9" rx="0.9" ry="0.4" fill="#a0a0a0" opacity="0.75"/><ellipse cx="37.2" cy="44.1" rx="1.4" ry="0.8" fill="#7a4a4c" opacity="0.94"/><ellipse cx="2.8" cy="48.9" rx="1.4" ry="0.7" fill="#7a4a4c" opacity="0.72"/><ellipse cx="0.0" cy="23.5" rx="1.8" ry="1.1" fill="#b4c4d0" opacity="0.72"/><ellipse cx="21.4" cy="30.9" rx="0.8" ry="0.4" fill="#c09484" opacity="0.72"/><ellipse cx="20.8" cy="37.4" rx="0.9" ry="0.4" fill="#c09484" opacity="0.86"/><ellipse cx="20.4" cy="30.6" rx="1.5" ry="1.0" fill="#c09484" opacity="0.8"/><ellipse cx="12.5" cy="48.1" rx="1.4" ry="1.0" fill="#4a4a4c" opacity="0.86"/><ellipse cx="22.1" cy="51.8" rx="1.4" ry="1.1" fill="#f0ece8" opacity="0.7"/><ellipse cx="29.2" cy="49.7" rx="1.3" ry="0.6" fill="#f0ece8" opacity="0.88"/><ellipse cx="35.2" cy="48.9" rx="1.0" ry="0.5" fill="#b4c4d0" opacity="0.8"/><ellipse cx="7.7" cy="36.0" rx="1.1" ry="0.6" fill="#3c3c40" opacity="0.81"/><ellipse cx="50.7" cy="30.0" rx="1.7" ry="0.9" fill="#3c3c40" opacity="0.81"/><ellipse cx="22.4" cy="39.0" rx="1.8" ry="0.8" fill="#e4e0dc" opacity="0.86"/><ellipse cx="27.6" cy="39.8" rx="1.6" ry="0.9" fill="#5a6a64" opacity="0.88"/><ellipse cx="30.7" cy="42.4" rx="1.6" ry="0.9" fill="#5a6a64" opacity="0.86"/><ellipse cx="28.9" cy="22.0" rx="1.3" ry="0.6" fill="#d0a08c" opacity="0.98"/><ellipse cx="14.2" cy="51.2" rx="1.0" ry="0.6" fill="#7a4a4c" opacity="0.83"/><ellipse cx="12.2" cy="27.6" rx="1.2" ry="0.6" fill="#a06c64" opacity="0.9"/><ellipse cx="31.5" cy="30.2" rx="0.7" ry="0.5" fill="#f0ece8" opacity="1.0"/><ellipse cx="45.5" cy="22.8" rx="1.1" ry="0.5" fill="#3c3c40" opacity="0.87"/><path d="M26 26L40 52" fill="none" stroke="#7a4a50" stroke-width="2" opacity="0.7"/><path d="M22 30l12 22" fill="none" stroke="#9a9aa4" stroke-width="1.4" opacity="0.7"/><ellipse cx="40" cy="32" rx="3" ry="2" fill="#4a7460" opacity="0.85"/><ellipse cx="44" cy="36" rx="2.5" ry="2" fill="#4c6c48" opacity="0.8"/></g></svg>
<svg style="position:absolute;left:119px;top:851px" width="52" height="52" viewBox="0 0 52 52" preserveAspectRatio="none"><defs><linearGradient id="g13" x1="0" y1="0" x2="0" y2="1"><stop offset="0" stop-color="#b2bac8"/><stop offset="0.3" stop-color="#d4d8dc"/><stop offset="0.52" stop-color="#c8ccd0"/><stop offset="0.55" stop-color="#3e4c3c"/><stop offset="0.6" stop-color="#3c582a"/><stop offset="0.7" stop-color="#466230"/><stop offset="0.76" stop-color="#84847c"/><stop offset="1" stop-color="#94928c"/></linearGradient><filter id="b_f_tree" x="-20%" y="-20%" width="140%" height="140%" color-interpolation-filters="sRGB"><feGaussianBlur in="SourceGraphic" stdDeviation="0.5" result="b"/><feTurbulence type="fractalNoise" baseFrequency="0.22 0.3" numOctaves="3" seed="48" result="n"/><feColorMatrix in="n" type="matrix" values="0.8 0.8 0.8 0 -0.7  0.8 0.8 0.8 0 -0.7  0.8 0.8 0.8 0 -0.7  0 0 0 0 1" result="g"/><feComposite in="b" in2="g" operator="arithmetic" k1="0" k2="1" k3="0.16" k4="-0.080"/></filter></defs><g filter="url(#b_f_tree)"><rect x="-3" y="-3" width="58" height="58" fill="url(#g13)"/><ellipse cx="44" cy="10" rx="8" ry="6" fill="#e6e8ec" opacity="0.85"/><ellipse cx="46" cy="24" rx="8" ry="3" fill="#e2e4e6" opacity="0.75"/><ellipse cx="38" cy="18" rx="6" ry="3" fill="#b8c0cc" opacity="0.6"/><ellipse cx="48" cy="3" rx="5" ry="2" fill="#a8b4c8" opacity="0.7"/><ellipse cx="16" cy="8" rx="18" ry="9" fill="#2a3a24"/><ellipse cx="30" cy="14" rx="10" ry="6" fill="#324428" opacity="0.9"/><ellipse cx="6" cy="18" rx="8" ry="8" fill="#24321e" opacity="0.9"/><ellipse cx="24" cy="4" rx="8" ry="4" fill="#4a5e44" opacity="0.6"/><ellipse cx="27.3" cy="2.0" rx="1.7" ry="1.7" fill="#c8d0d4" opacity="0.51"/><ellipse cx="39.3" cy="9.6" rx="1.9" ry="2.1" fill="#566c48" opacity="0.74"/><ellipse cx="11.3" cy="8.3" rx="1.8" ry="1.5" fill="#243420" opacity="0.54"/><ellipse cx="3.0" cy="6.3" rx="1.3" ry="1.2" fill="#c8d0d4" opacity="0.73"/><ellipse cx="25.6" cy="12.6" rx="0.8" ry="0.7" fill="#3e5430" opacity="0.7"/><ellipse cx="2.5" cy="0.2" rx="1.5" ry="1.2" fill="#c8d0d4" opacity="0.59"/><ellipse cx="13.0" cy="11.6" rx="1.9" ry="1.2" fill="#243420" opacity="0.86"/><ellipse cx="8.7" cy="15.8" rx="1.8" ry="1.5" fill="#1a2616" opacity="0.75"/><ellipse cx="11.3" cy="15.8" rx="1.5" ry="1.1" fill="#c8d0d4" opacity="0.75"/><ellipse cx="17.6" cy="2.3" rx="1.7" ry="1.2" fill="#3e5430" opacity="0.54"/><ellipse cx="26.0" cy="7.5" rx="0.8" ry="0.9" fill="#243420" opacity="0.73"/><ellipse cx="25.1" cy="14.5" rx="1.9" ry="1.4" fill="#243420" opacity="0.73"/><ellipse cx="21.7" cy="6.5" rx="1.1" ry="1.0" fill="#566c48" opacity="0.73"/><ellipse cx="21.6" cy="15.1" rx="1.3" ry="0.8" fill="#243420" opacity="0.59"/><ellipse cx="6.9" cy="9.8" rx="0.9" ry="0.6" fill="#1a2616" opacity="0.52"/><ellipse cx="32.9" cy="15.5" rx="2.1" ry="2.0" fill="#1a2616" opacity="0.8"/><ellipse cx="11.2" cy="13.2" rx="2.0" ry="1.7" fill="#3e5430" opacity="0.79"/><ellipse cx="33.8" cy="14.1" rx="2.1" ry="1.9" fill="#243420" opacity="0.6"/><ellipse cx="38.6" cy="4.8" rx="2.2" ry="2.2" fill="#1a2616" opacity="0.89"/><ellipse cx="34.8" cy="18.9" rx="2.1" ry="2.2" fill="#566c48" opacity="0.89"/><ellipse cx="36.6" cy="13.3" rx="1.6" ry="1.1" fill="#c8d0d4" opacity="0.79"/><ellipse cx="11.3" cy="7.0" rx="1.5" ry="1.6" fill="#1a2616" opacity="0.88"/><ellipse cx="23.8" cy="1.9" rx="1.8" ry="1.2" fill="#1a2616" opacity="0.77"/><ellipse cx="37.8" cy="3.6" rx="1.1" ry="0.8" fill="#243420" opacity="0.57"/><ellipse cx="32.9" cy="17.7" rx="1.2" ry="0.9" fill="#243420" opacity="0.89"/><ellipse cx="14.4" cy="0.1" rx="1.8" ry="1.4" fill="#566c48" opacity="0.81"/><ellipse cx="3.0" cy="12.0" rx="2.1" ry="1.5" fill="#3e5430" opacity="0.73"/><ellipse cx="22.7" cy="9.2" rx="1.5" ry="1.1" fill="#3e5430" opacity="0.83"/><ellipse cx="23.2" cy="10.1" rx="1.6" ry="1.5" fill="#243420" opacity="0.56"/><ellipse cx="19.8" cy="9.9" rx="1.1" ry="0.8" fill="#3e5430" opacity="0.73"/><path d="M10 44q0-12 2-20t6-14M12 30q6-6 10-14M11 26q-3-6-6-10" fill="none" stroke="#2a2a22" stroke-width="1.8"/><ellipse cx="10" cy="34" rx="8" ry="8" fill="#24321c" opacity="0.9"/><ellipse cx="5" cy="42" rx="4" ry="4" fill="#1a2412" opacity="0.9"/><ellipse cx="24" cy="40" rx="4" ry="1.5" fill="#484642" opacity="0.9"/><ellipse cx="4" cy="50" rx="6" ry="4" fill="#686660" opacity="0.9"/><ellipse cx="26.4" cy="41.2" rx="1.1" ry="0.6" fill="#c4c2bc" opacity="0.76"/><ellipse cx="22.2" cy="41.9" rx="2.2" ry="1.1" fill="#a8a6a0" opacity="0.71"/><ellipse cx="38.4" cy="49.8" rx="1.5" ry="0.5" fill="#8c8a84" opacity="0.79"/><ellipse cx="23.7" cy="41.6" rx="1.9" ry="0.8" fill="#a8a6a0" opacity="0.71"/><ellipse cx="11.4" cy="50.1" rx="2.1" ry="0.7" fill="#b8b6b0" opacity="0.69"/><ellipse cx="15.4" cy="47.4" rx="1.0" ry="0.5" fill="#8c8a84" opacity="0.42"/><ellipse cx="23.7" cy="46.7" rx="1.8" ry="0.6" fill="#a8a6a0" opacity="0.52"/><ellipse cx="16.3" cy="47.3" rx="1.5" ry="0.7" fill="#7c7a74" opacity="0.74"/><ellipse cx="19.9" cy="39.2" rx="0.9" ry="0.5" fill="#7c7a74" opacity="0.57"/><ellipse cx="42.0" cy="45.6" rx="2.2" ry="1.0" fill="#b8b6b0" opacity="0.47"/><ellipse cx="44.7" cy="48.0" rx="2.0" ry="0.9" fill="#a8a6a0" opacity="0.79"/><ellipse cx="40.3" cy="50.5" rx="1.5" ry="0.7" fill="#a8a6a0" opacity="0.64"/><ellipse cx="28.0" cy="49.9" rx="2.3" ry="0.8" fill="#7c7a74" opacity="0.55"/><ellipse cx="29.8" cy="48.1" rx="2.1" ry="0.7" fill="#b8b6b0" opacity="0.62"/><ellipse cx="49.9" cy="41.5" rx="1.4" ry="0.7" fill="#c4c2bc" opacity="0.55"/><ellipse cx="48.1" cy="48.5" rx="2.0" ry="0.7" fill="#8c8a84" opacity="0.49"/><ellipse cx="19.7" cy="44.6" rx="1.2" ry="0.7" fill="#c4c2bc" opacity="0.63"/><ellipse cx="16.7" cy="42.6" rx="1.2" ry="0.6" fill="#a8a6a0" opacity="0.73"/><ellipse cx="29.2" cy="48.4" rx="1.1" ry="0.5" fill="#7c7a74" opacity="0.79"/><ellipse cx="48.4" cy="49.5" rx="0.8" ry="0.4" fill="#8c8a84" opacity="0.66"/><ellipse cx="32.1" cy="47.1" rx="1.1" ry="0.5" fill="#a8a6a0" opacity="0.42"/><ellipse cx="38.7" cy="47.7" rx="1.1" ry="0.4" fill="#b8b6b0" opacity="0.51"/><ellipse cx="21.1" cy="43.3" rx="1.2" ry="0.4" fill="#b8b6b0" opacity="0.65"/><ellipse cx="27.9" cy="43.6" rx="1.6" ry="0.8" fill="#a8a6a0" opacity="0.6"/><ellipse cx="35.5" cy="41.3" rx="1.1" ry="0.5" fill="#a8a6a0" opacity="0.5"/><ellipse cx="30.3" cy="46.0" rx="1.4" ry="0.6" fill="#c4c2bc" opacity="0.41"/><ellipse cx="30" cy="38" rx="3" ry="1.2" fill="#3c3c38" opacity="0.8"/></g></svg>
<svg style="position:absolute;left:175px;top:851px" width="52" height="52" viewBox="0 0 52 52" preserveAspectRatio="none"><defs><linearGradient id="g14" x1="0" y1="0" x2="0" y2="1"><stop offset="0" stop-color="#3a32ae"/><stop offset="0.25" stop-color="#3836c2"/><stop offset="0.5" stop-color="#2236ae"/><stop offset="0.58" stop-color="#2e3e9e"/><stop offset="0.62" stop-color="#c69298"/><stop offset="0.69" stop-color="#c8a690"/><stop offset="0.75" stop-color="#3a2c1c"/><stop offset="1" stop-color="#282612"/></linearGradient><filter id="b_f_night" x="-20%" y="-20%" width="140%" height="140%" color-interpolation-filters="sRGB"><feGaussianBlur in="SourceGraphic" stdDeviation="0.5" result="b"/><feTurbulence type="fractalNoise" baseFrequency="0.22 0.3" numOctaves="3" seed="57" result="n"/><feColorMatrix in="n" type="matrix" values="0.8 0.8 0.8 0 -0.7  0.8 0.8 0.8 0 -0.7  0.8 0.8 0.8 0 -0.7  0 0 0 0 1" result="g"/><feComposite in="b" in2="g" operator="arithmetic" k1="0" k2="1" k3="0.16" k4="-0.080"/></filter></defs><g filter="url(#b_f_night)"><rect x="-3" y="-3" width="58" height="58" fill="url(#g14)"/><ellipse cx="20" cy="15" rx="20" ry="15" fill="#6644b6" opacity="0.45"/><ellipse cx="18" cy="15" rx="12" ry="10" fill="#7450bc" opacity="0.5"/><ellipse cx="14" cy="21" rx="8" ry="6" fill="#8058c0" opacity="0.4"/><ellipse cx="45" cy="16" rx="10" ry="13" fill="#1646d6" opacity="0.6"/><ellipse cx="24" cy="33.5" rx="18" ry="1.6" fill="#eacaca" opacity="0.8"/><ellipse cx="42" cy="34" rx="8" ry="1.2" fill="#d8a8b0" opacity="0.7"/><path d="M-2 -2h56v4q-4 3-8 1t-8-3q-8 0-14 1t-12-1q-4 2-6 7l-8-2z" fill="#2a2a3a"/><ellipse cx="8" cy="5" rx="3" ry="2" fill="#222a3a"/><ellipse cx="4" cy="9" rx="2" ry="2" fill="#1c2434"/><ellipse cx="48" cy="2" rx="4" ry="2" fill="#2c2c44"/><ellipse cx="6" cy="42" rx="8" ry="5" fill="#32321a"/><ellipse cx="24" cy="46" rx="12" ry="5" fill="#2a2812"/><ellipse cx="40" cy="44" rx="8" ry="4" fill="#48421e" opacity="0.8"/><ellipse cx="22" cy="39" rx="6" ry="1.4" fill="#9c7c52" opacity="0.75"/><ellipse cx="48" cy="48" rx="6" ry="4" fill="#1a1a0e"/><ellipse cx="1.1" cy="47.7" rx="1.0" ry="0.8" fill="#7a7430" opacity="0.78"/><ellipse cx="4.2" cy="46.4" rx="1.5" ry="1.3" fill="#3a2c1c" opacity="0.65"/><ellipse cx="45.0" cy="45.7" rx="1.7" ry="1.4" fill="#1a1a0c" opacity="0.52"/><ellipse cx="4.8" cy="39.7" rx="1.0" ry="0.7" fill="#2c3418" opacity="0.55"/><ellipse cx="19.9" cy="51.7" rx="1.1" ry="0.8" fill="#4a4a1c" opacity="0.52"/><ellipse cx="2.3" cy="51.2" rx="1.8" ry="1.3" fill="#4a4a1c" opacity="0.71"/><ellipse cx="4.6" cy="50.0" rx="1.5" ry="1.6" fill="#7a7430" opacity="0.52"/><ellipse cx="44.6" cy="44.4" rx="1.6" ry="1.5" fill="#6a6428" opacity="0.71"/><ellipse cx="36.9" cy="40.3" rx="1.8" ry="1.8" fill="#4a4a1c" opacity="0.85"/><ellipse cx="13.5" cy="48.2" rx="1.6" ry="1.0" fill="#3a2c1c" opacity="0.77"/><ellipse cx="15.0" cy="50.6" rx="1.7" ry="1.3" fill="#2c3418" opacity="0.52"/><ellipse cx="51.2" cy="46.4" rx="0.9" ry="0.6" fill="#4a4a1c" opacity="0.85"/><ellipse cx="38.5" cy="46.0" rx="1.2" ry="1.1" fill="#2c3418" opacity="0.68"/><ellipse cx="1.1" cy="38.0" rx="1.9" ry="2.1" fill="#4a4a1c" opacity="0.55"/><ellipse cx="-0.1" cy="48.8" rx="1.8" ry="1.8" fill="#4a4a1c" opacity="0.79"/><ellipse cx="25.9" cy="51.1" rx="1.6" ry="1.6" fill="#2c3418" opacity="0.53"/><ellipse cx="0.8" cy="48.0" rx="1.8" ry="1.7" fill="#1a1a0c" opacity="0.77"/><ellipse cx="30.1" cy="41.6" rx="1.5" ry="1.6" fill="#6a6428" opacity="0.66"/><ellipse cx="1.8" cy="45.5" rx="1.7" ry="1.2" fill="#7a7430" opacity="0.89"/><ellipse cx="35.2" cy="51.4" rx="1.1" ry="0.8" fill="#1a1a0c" opacity="0.89"/><ellipse cx="43.4" cy="43.4" rx="0.9" ry="0.8" fill="#4a4a1c" opacity="0.51"/><ellipse cx="28.5" cy="46.6" rx="1.4" ry="1.5" fill="#3a2c1c" opacity="0.88"/><ellipse cx="30.3" cy="41.7" rx="1.0" ry="1.0" fill="#1a1a0c" opacity="0.6"/><ellipse cx="4.9" cy="41.1" rx="1.5" ry="1.2" fill="#2c3418" opacity="0.67"/></g></svg>
<svg style="position:absolute;left:231px;top:851px" width="52" height="52" viewBox="0 0 52 52" preserveAspectRatio="none"><defs><linearGradient id="g15" x1="0" y1="0" x2="0" y2="1"><stop offset="0" stop-color="#c6cad2"/><stop offset="0.1" stop-color="#e0e0e2"/><stop offset="0.42" stop-color="#e4e2e0"/><stop offset="0.45" stop-color="#8ca0ac"/><stop offset="0.5" stop-color="#5c7c8c"/><stop offset="0.56" stop-color="#28421a"/><stop offset="1" stop-color="#304c1a"/></linearGradient><filter id="b_f_jungle" x="-20%" y="-20%" width="140%" height="140%" color-interpolation-filters="sRGB"><feGaussianBlur in="SourceGraphic" stdDeviation="0.5" result="b"/><feTurbulence type="fractalNoise" baseFrequency="0.22 0.3" numOctaves="3" seed="67" result="n"/><feColorMatrix in="n" type="matrix" values="0.8 0.8 0.8 0 -0.7  0.8 0.8 0.8 0 -0.7  0.8 0.8 0.8 0 -0.7  0 0 0 0 1" result="g"/><feComposite in="b" in2="g" operator="arithmetic" k1="0" k2="1" k3="0.16" k4="-0.080"/></filter></defs><g filter="url(#b_f_jungle)"><rect x="-3" y="-3" width="58" height="58" fill="url(#g15)"/><ellipse cx="24" cy="3" rx="12" ry="1.5" fill="#a2aab6" opacity="0.75"/><ellipse cx="12" cy="14" rx="10" ry="2" fill="#d0ccc8" opacity="0.6"/><ellipse cx="40" cy="8" rx="10" ry="2" fill="#f0eeec" opacity="0.7"/><ellipse cx="30" cy="18" rx="14" ry="1.6" fill="#d8d0cc" opacity="0.6"/><path d="M42 31l1-9q1.500-1.800 3 0l1 9z" fill="#4a5666"/><rect x="43.5" y="25" width="2" height="1.5" fill="#a0a8b0"/><rect x="11" y="23" width="3" height="2.5" fill="#324e5a"/><ellipse cx="18.0" cy="38.9" rx="1.4" ry="0.9" fill="#668234" opacity="0.68"/><ellipse cx="1.2" cy="38.6" rx="0.8" ry="0.4" fill="#243a14" opacity="0.92"/><ellipse cx="41.8" cy="45.6" rx="0.8" ry="0.6" fill="#32501a" opacity="0.76"/><ellipse cx="11.4" cy="41.0" rx="1.3" ry="1.1" fill="#203412" opacity="0.75"/><ellipse cx="37.7" cy="37.1" rx="1.3" ry="0.9" fill="#182a0e" opacity="0.61"/><ellipse cx="44.4" cy="50.0" rx="0.8" ry="0.5" fill="#32501a" opacity="0.76"/><ellipse cx="26.4" cy="47.7" rx="0.9" ry="0.7" fill="#182a0e" opacity="0.92"/><ellipse cx="44.7" cy="34.0" rx="1.8" ry="1.4" fill="#32501a" opacity="0.8"/><ellipse cx="14.5" cy="46.8" rx="1.1" ry="0.8" fill="#243a14" opacity="0.66"/><ellipse cx="29.5" cy="40.1" rx="1.6" ry="1.0" fill="#182a0e" opacity="0.77"/><ellipse cx="32.9" cy="33.8" rx="1.5" ry="1.3" fill="#56782a" opacity="0.7"/><ellipse cx="52.0" cy="41.6" rx="1.9" ry="1.0" fill="#243a14" opacity="0.73"/><ellipse cx="32.6" cy="40.0" rx="1.9" ry="1.2" fill="#203412" opacity="0.77"/><ellipse cx="47.6" cy="43.0" rx="2.1" ry="1.8" fill="#32501a" opacity="0.87"/><ellipse cx="30.2" cy="33.9" rx="1.4" ry="1.2" fill="#56782a" opacity="0.58"/><ellipse cx="48.7" cy="31.9" rx="1.0" ry="0.8" fill="#32501a" opacity="0.74"/><ellipse cx="4.8" cy="39.2" rx="1.7" ry="1.1" fill="#32501a" opacity="0.51"/><ellipse cx="1.3" cy="33.2" rx="1.5" ry="1.0" fill="#12200a" opacity="0.74"/><ellipse cx="29.4" cy="29.2" rx="0.9" ry="0.7" fill="#32501a" opacity="0.79"/><ellipse cx="1.5" cy="43.3" rx="1.8" ry="1.1" fill="#203412" opacity="0.54"/><ellipse cx="1.9" cy="41.6" rx="1.1" ry="0.9" fill="#56782a" opacity="0.75"/><ellipse cx="40.2" cy="43.2" rx="2.2" ry="1.1" fill="#12200a" opacity="0.65"/><ellipse cx="1.8" cy="31.6" rx="1.4" ry="1.2" fill="#12200a" opacity="0.77"/><ellipse cx="2.4" cy="40.7" rx="2.1" ry="1.6" fill="#12200a" opacity="0.87"/><ellipse cx="22.5" cy="42.0" rx="1.9" ry="1.0" fill="#243a14" opacity="0.85"/><ellipse cx="25.5" cy="31.6" rx="1.1" ry="0.9" fill="#56782a" opacity="0.71"/><ellipse cx="30.7" cy="44.4" rx="2.1" ry="1.8" fill="#203412" opacity="0.93"/><ellipse cx="9.2" cy="44.6" rx="0.9" ry="0.5" fill="#12200a" opacity="0.67"/><ellipse cx="38.0" cy="31.5" rx="1.5" ry="1.1" fill="#12200a" opacity="0.74"/><ellipse cx="41.7" cy="42.3" rx="1.4" ry="1.1" fill="#182a0e" opacity="0.83"/><ellipse cx="3.9" cy="50.6" rx="1.5" ry="0.9" fill="#32501a" opacity="0.74"/><ellipse cx="18.4" cy="31.5" rx="2.1" ry="1.7" fill="#668234" opacity="0.66"/><ellipse cx="17.9" cy="48.9" rx="2.1" ry="1.5" fill="#243a14" opacity="0.61"/><ellipse cx="14.6" cy="39.7" rx="1.7" ry="1.4" fill="#243a14" opacity="0.7"/><ellipse cx="40.9" cy="36.3" rx="1.7" ry="0.9" fill="#12200a" opacity="0.5"/><ellipse cx="21.8" cy="39.5" rx="1.4" ry="1.1" fill="#243a14" opacity="0.63"/><ellipse cx="15.4" cy="50.5" rx="1.4" ry="1.0" fill="#182a0e" opacity="0.73"/><ellipse cx="26.7" cy="36.2" rx="0.8" ry="0.6" fill="#668234" opacity="0.89"/><ellipse cx="48.4" cy="42.6" rx="1.6" ry="1.2" fill="#12200a" opacity="0.78"/><ellipse cx="8.7" cy="45.1" rx="1.9" ry="1.1" fill="#56782a" opacity="0.78"/><ellipse cx="25.2" cy="30.4" rx="1.4" ry="1.2" fill="#668234" opacity="0.5"/><ellipse cx="6.5" cy="30.7" rx="1.3" ry="0.8" fill="#12200a" opacity="0.78"/><ellipse cx="38.5" cy="40.8" rx="0.9" ry="0.7" fill="#668234" opacity="0.92"/><ellipse cx="28.7" cy="48.6" rx="1.0" ry="0.7" fill="#12200a" opacity="0.7"/><ellipse cx="43.7" cy="38.1" rx="1.5" ry="1.0" fill="#182a0e" opacity="0.64"/><ellipse cx="44.8" cy="32.0" rx="1.8" ry="1.2" fill="#3e5e22" opacity="0.61"/><ellipse cx="41.7" cy="31.1" rx="2.2" ry="1.4" fill="#3e5e22" opacity="0.77"/><ellipse cx="26.9" cy="33.8" rx="1.2" ry="1.0" fill="#243a14" opacity="0.73"/><ellipse cx="5.1" cy="41.9" rx="1.2" ry="0.7" fill="#182a0e" opacity="0.68"/><ellipse cx="24.6" cy="42.5" rx="1.4" ry="0.8" fill="#32501a" opacity="0.86"/><ellipse cx="4.8" cy="30.5" rx="1.6" ry="0.9" fill="#56782a" opacity="0.54"/><ellipse cx="26.8" cy="45.5" rx="0.9" ry="0.5" fill="#668234" opacity="0.89"/><ellipse cx="5.6" cy="38.5" rx="1.6" ry="0.9" fill="#32501a" opacity="0.85"/><ellipse cx="33.6" cy="31.3" rx="1.1" ry="0.8" fill="#32501a" opacity="0.92"/><ellipse cx="3.9" cy="36.3" rx="1.8" ry="1.5" fill="#668234" opacity="0.73"/><ellipse cx="29.9" cy="46.7" rx="2.1" ry="1.7" fill="#668234" opacity="0.79"/><ellipse cx="22.5" cy="38.5" rx="1.5" ry="0.8" fill="#32501a" opacity="0.52"/><ellipse cx="49.7" cy="49.7" rx="1.4" ry="1.0" fill="#3e5e22" opacity="0.88"/><ellipse cx="22.6" cy="50.0" rx="1.3" ry="1.0" fill="#56782a" opacity="0.91"/><ellipse cx="35.1" cy="39.8" rx="2.1" ry="1.4" fill="#3e5e22" opacity="0.92"/><ellipse cx="10" cy="36" rx="8" ry="3" fill="#223812" opacity="0.85"/><ellipse cx="44" cy="44" rx="5" ry="3" fill="#6a9034" opacity="0.7"/><ellipse cx="34" cy="42" rx="5" ry="2.5" fill="#223a12" opacity="0.9"/></g></svg>
<svg style="position:absolute;left:287px;top:851px" width="52" height="52" viewBox="0 0 52 52" preserveAspectRatio="none"><defs><linearGradient id="g16" x1="0" y1="0" x2="0" y2="1"><stop offset="0" stop-color="#c2cadc"/><stop offset="0.2" stop-color="#dce0e8"/><stop offset="0.45" stop-color="#e4e0d8"/><stop offset="0.7" stop-color="#5a4642"/><stop offset="1" stop-color="#4a3a3a"/></linearGradient><filter id="b_f_street" x="-20%" y="-20%" width="140%" height="140%" color-interpolation-filters="sRGB"><feGaussianBlur in="SourceGraphic" stdDeviation="0.5" result="b"/><feTurbulence type="fractalNoise" baseFrequency="0.22 0.3" numOctaves="3" seed="85" result="n"/><feColorMatrix in="n" type="matrix" values="0.8 0.8 0.8 0 -0.7  0.8 0.8 0.8 0 -0.7  0.8 0.8 0.8 0 -0.7  0 0 0 0 1" result="g"/><feComposite in="b" in2="g" operator="arithmetic" k1="0" k2="1" k3="0.16" k4="-0.080"/></filter></defs><g filter="url(#b_f_street)"><rect x="-3" y="-3" width="58" height="58" fill="url(#g16)"/><path d="M19 16l8-8q4-4 8 0l8 8z" fill="#3868a0"/><path d="M25 10l3-3q3-2 6 0l3 3z" fill="#2c5890"/><ellipse cx="30" cy="17" rx="10" ry="2.2" fill="#f0f2f6"/><rect x="22" y="20" width="18" height="3" fill="#d6b262" opacity="0.85"/><rect x="26" y="23" width="8" height="8" fill="#a8b4c8" opacity="0.7"/><path d="M-2 -2h6l14 14v30l-8 8h-12z" fill="#8e6c50"/><rect x="-2" y="0" width="5" height="54" fill="#b09070" opacity="0.85"/><rect x="3" y="18" width="3" height="24" fill="#3a2a26"/><rect x="9" y="17" width="6" height="24" fill="#4262a2"/><ellipse cx="19" cy="25" rx="3" ry="3" fill="#a65e2e"/><rect x="6" y="8" width="3" height="8" fill="#7a5c44" opacity="0.8"/><rect x="16" y="20" width="3" height="18" fill="#b28a4e" opacity="0.9"/><path d="M54 2L36 24v18l18 6z" fill="#c4a474"/><rect x="48" y="22" width="3" height="10" fill="#785a3a" opacity="0.85"/><rect x="42" y="26" width="2" height="8" fill="#9a7850" opacity="0.8"/><ellipse cx="46" cy="36" rx="3" ry="2" fill="#e6e6ea" opacity="0.75"/><path d="M54 2l-12 14h12z" fill="#e0c498" opacity="0.8"/><path d="M-2 54V44q14-10 30-10t26 6V54z" fill="#4a3a3a"/><ellipse cx="44" cy="48" rx="5" ry="2" fill="#c6b6b2" opacity="0.65"/><ellipse cx="40" cy="42" rx="4" ry="1.5" fill="#d2a282" opacity="0.65"/><ellipse cx="33.2" cy="50.7" rx="1.3" ry="0.6" fill="#6c5c58" opacity="0.61"/><ellipse cx="38.3" cy="48.7" rx="1.8" ry="0.6" fill="#5c4c4c" opacity="0.79"/><ellipse cx="21.1" cy="41.6" rx="1.9" ry="0.6" fill="#5c4c4c" opacity="0.54"/><ellipse cx="25.4" cy="42.7" rx="1.0" ry="0.4" fill="#6c5c58" opacity="0.74"/><ellipse cx="28.5" cy="44.8" rx="1.9" ry="0.7" fill="#5c4c4c" opacity="0.44"/><ellipse cx="35.8" cy="45.0" rx="1.3" ry="0.5" fill="#5c4c4c" opacity="0.7"/><ellipse cx="25.7" cy="49.9" rx="1.1" ry="0.4" fill="#5c4c4c" opacity="0.76"/><ellipse cx="9.5" cy="49.0" rx="0.9" ry="0.5" fill="#3a2c2c" opacity="0.77"/><ellipse cx="30.1" cy="43.1" rx="0.9" ry="0.4" fill="#5c4c4c" opacity="0.48"/><ellipse cx="29.5" cy="47.7" rx="1.6" ry="0.7" fill="#6c5c58" opacity="0.59"/><ellipse cx="21.5" cy="45.8" rx="1.5" ry="0.5" fill="#6c5c58" opacity="0.57"/><ellipse cx="23.2" cy="40.9" rx="1.0" ry="0.5" fill="#5c4c4c" opacity="0.73"/><ellipse cx="32.3" cy="51.1" rx="1.1" ry="0.5" fill="#6c5c58" opacity="0.59"/><ellipse cx="24.7" cy="42.2" rx="1.1" ry="0.4" fill="#5c4c4c" opacity="0.51"/></g></svg>
<svg style="position:absolute;left:343px;top:851px" width="52" height="52" viewBox="0 0 52 52" preserveAspectRatio="none"><defs><linearGradient id="g17" x1="0" y1="0" x2="0" y2="1"><stop offset="0" stop-color="#8a8ab6"/><stop offset="0.12" stop-color="#aeaece"/><stop offset="0.24" stop-color="#a2a2c2"/><stop offset="0.3" stop-color="#727a9a"/><stop offset="0.5" stop-color="#626686"/><stop offset="1" stop-color="#4e526e"/></linearGradient><filter id="b_f_pier" x="-20%" y="-20%" width="140%" height="140%" color-interpolation-filters="sRGB"><feGaussianBlur in="SourceGraphic" stdDeviation="0.5" result="b"/><feTurbulence type="fractalNoise" baseFrequency="0.22 0.3" numOctaves="3" seed="48" result="n"/><feColorMatrix in="n" type="matrix" values="0.8 0.8 0.8 0 -0.7  0.8 0.8 0.8 0 -0.7  0.8 0.8 0.8 0 -0.7  0 0 0 0 1" result="g"/><feComposite in="b" in2="g" operator="arithmetic" k1="0" k2="1" k3="0.16" k4="-0.080"/></filter></defs><g filter="url(#b_f_pier)"><rect x="-3" y="-3" width="58" height="58" fill="url(#g17)"/><ellipse cx="6" cy="9" rx="6" ry="3" fill="#e6e6f2" opacity="0.85"/><ellipse cx="22" cy="6" rx="12" ry="4" fill="#c2bedc" opacity="0.75"/><ellipse cx="44" cy="9" rx="6" ry="4" fill="#d6d6e6" opacity="0.75"/><ellipse cx="40" cy="3" rx="10" ry="2" fill="#8282b6" opacity="0.75"/><ellipse cx="14" cy="3" rx="8" ry="2" fill="#9494c0" opacity="0.7"/><path d="M-2 13q8 0 14 3t14 0l10-2q8 0 18 2v5H-2z" fill="#7a829e" opacity="0.9"/><path d="M28 20L10 54h36L34 18z" fill="#a2929e"/><path d="M28 20L8 54h6L30 22z" fill="#3a3646"/><path d="M24 30h12M20 38h20M16 46h28" fill="none" stroke="#8a7a88" stroke-width="0.7"/><path d="M10 24v22" fill="none" stroke="#2a2a36" stroke-width="2"/><path d="M36 10v24" fill="none" stroke="#58586e" stroke-width="1.4"/><path d="M19 26v8" fill="none" stroke="#32323a" stroke-width="1.4"/><path d="M32 20v10" fill="none" stroke="#424258" stroke-width="1.2"/><path d="M36 20l-8 4" fill="none" stroke="#4a4a60" stroke-width="0.8"/><ellipse cx="5" cy="49" rx="7" ry="4" fill="#4a6220"/><ellipse cx="2" cy="44" rx="3" ry="3" fill="#3a4c24" opacity="0.8"/><path d="M44 54L36 26l2-4 16 30z" fill="#4a4a66" opacity="0.8"/></g></svg>
<svg style="position:absolute;left:399px;top:851px" width="52" height="52" viewBox="0 0 52 52" preserveAspectRatio="none"><defs><linearGradient id="g18" x1="0" y1="0" x2="0" y2="1"><stop offset="0" stop-color="#3e4c7e"/><stop offset="0.2" stop-color="#3a4878"/><stop offset="0.32" stop-color="#44566e"/><stop offset="0.38" stop-color="#2e4052"/><stop offset="0.6" stop-color="#2e445a"/><stop offset="0.72" stop-color="#263440"/><stop offset="1" stop-color="#242020"/></linearGradient><filter id="b_f_palm" x="-20%" y="-20%" width="140%" height="140%" color-interpolation-filters="sRGB"><feGaussianBlur in="SourceGraphic" stdDeviation="0.5" result="b"/><feTurbulence type="fractalNoise" baseFrequency="0.22 0.3" numOctaves="3" seed="42" result="n"/><feColorMatrix in="n" type="matrix" values="0.8 0.8 0.8 0 -0.7  0.8 0.8 0.8 0 -0.7  0.8 0.8 0.8 0 -0.7  0 0 0 0 1" result="g"/><feComposite in="b" in2="g" operator="arithmetic" k1="0" k2="1" k3="0.16" k4="-0.080"/></filter></defs><g filter="url(#b_f_palm)"><rect x="-3" y="-3" width="58" height="58" fill="url(#g18)"/><ellipse cx="23" cy="11" rx="4" ry="2.5" fill="#f0f2f8"/><ellipse cx="8" cy="16" rx="10" ry="1.5" fill="#8a9ab6" opacity="0.65"/><ellipse cx="44" cy="16" rx="8" ry="1.5" fill="#8292b2" opacity="0.65"/><ellipse cx="4" cy="4" rx="5" ry="1.5" fill="#6a7aae" opacity="0.65"/><ellipse cx="36" cy="6" rx="8" ry="2" fill="#5a6aa0" opacity="0.6"/><path d="M0 19q10-1 16-1l6-3.500 8 3.500q10 1 24 0v4H0z" fill="#323e4a"/><ellipse cx="22" cy="28" rx="4" ry="8" fill="#6a7a92" opacity="0.5"/><path d="M38 32L26 26M38 32L30 22M38 32L38 21M38 32L46 23M38 32L52 28M38 32l-14 2M38 32l14 6" fill="none" stroke="#345028" stroke-width="2"/><ellipse cx="38" cy="31" rx="10" ry="6" fill="#2a4424" opacity="0.9"/><ellipse cx="34" cy="30" rx="5" ry="3" fill="#4a6830" opacity="0.8"/><ellipse cx="46" cy="36" rx="6" ry="4" fill="#1c301a" opacity="0.9"/><path d="M-2 37q20 1 32 3t24-2" fill="none" stroke="#6a5a52" stroke-width="2"/><path d="M-2 41q20 3 34 2" fill="none" stroke="#5a5252" stroke-width="1.4"/><rect x="36" y="38" width="3.5" height="14" fill="#3a2a2a"/><path d="M30 42l-6 10M44 42l6 10" fill="none" stroke="#5c5454" stroke-width="1.5"/><ellipse cx="40" cy="47" rx="8" ry="4" fill="#52363a" opacity="0.9"/><ellipse cx="18" cy="48" rx="6" ry="3" fill="#5a5a52" opacity="0.7"/><ellipse cx="6" cy="46" rx="8" ry="5" fill="#223636" opacity="0.8"/></g></svg>
<svg style="position:absolute;left:455px;top:851px" width="52" height="52" viewBox="0 0 52 52" preserveAspectRatio="none"><defs><linearGradient id="g19" x1="0" y1="0" x2="0" y2="1"><stop offset="0" stop-color="#b2c2de"/><stop offset="0.3" stop-color="#cad6ea"/><stop offset="0.55" stop-color="#dae2ee"/><stop offset="0.6" stop-color="#3c4c36"/><stop offset="0.8" stop-color="#2e3e26"/><stop offset="0.86" stop-color="#5e7a38"/><stop offset="1" stop-color="#6e8640"/></linearGradient><filter id="b_f_garden" x="-20%" y="-20%" width="140%" height="140%" color-interpolation-filters="sRGB"><feGaussianBlur in="SourceGraphic" stdDeviation="0.5" result="b"/><feTurbulence type="fractalNoise" baseFrequency="0.22 0.3" numOctaves="3" seed="47" result="n"/><feColorMatrix in="n" type="matrix" values="0.8 0.8 0.8 0 -0.7  0.8 0.8 0.8 0 -0.7  0.8 0.8 0.8 0 -0.7  0 0 0 0 1" result="g"/><feComposite in="b" in2="g" operator="arithmetic" k1="0" k2="1" k3="0.16" k4="-0.080"/></filter></defs><g filter="url(#b_f_garden)"><rect x="-3" y="-3" width="58" height="58" fill="url(#g19)"/><ellipse cx="28" cy="18" rx="8" ry="6" fill="#f2f4fa" opacity="0.85"/><ellipse cx="20" cy="6" rx="10" ry="4" fill="#becae2" opacity="0.6"/><ellipse cx="40" cy="4" rx="8" ry="3" fill="#a8bcdc" opacity="0.6"/><path d="M-2 4q5 4 8 12t8 12v18H-2z" fill="#141c12"/><ellipse cx="2" cy="34" rx="6" ry="10" fill="#2a2a32" opacity="0.7"/><ellipse cx="6" cy="22" rx="3" ry="6" fill="#2c3c24" opacity="0.8"/><ellipse cx="18" cy="26" rx="4" ry="3" fill="#1a2a1a"/><ellipse cx="14" cy="24" rx="2" ry="2" fill="#1c2c1c"/><path d="M10 28q10-4 24 0v14H10z" fill="#2a3e22"/><ellipse cx="26" cy="36" rx="10" ry="3" fill="#4a622e" opacity="0.85"/><ellipse cx="24" cy="30" rx="6" ry="2" fill="#1c2c18" opacity="0.9"/><ellipse cx="44" cy="22" rx="10" ry="12" fill="#2a4024"/><ellipse cx="42" cy="14" rx="5" ry="4" fill="#3c5830" opacity="0.85"/><ellipse cx="50" cy="36" rx="6" ry="8" fill="#1c2e1a"/><ellipse cx="40" cy="34" rx="4" ry="6" fill="#727a72" opacity="0.6"/><ellipse cx="38.3" cy="38.0" rx="1.9" ry="1.2" fill="#4a683c" opacity="0.79"/><ellipse cx="46.9" cy="10.3" rx="1.8" ry="1.4" fill="#4a683c" opacity="0.8"/><ellipse cx="47.8" cy="20.2" rx="1.6" ry="1.7" fill="#1e301c" opacity="0.54"/><ellipse cx="46.2" cy="35.4" rx="1.2" ry="0.7" fill="#1e301c" opacity="0.73"/><ellipse cx="52.3" cy="17.6" rx="0.9" ry="0.8" fill="#1e301c" opacity="0.85"/><ellipse cx="44.9" cy="29.9" rx="0.8" ry="0.5" fill="#4a683c" opacity="0.71"/><ellipse cx="38.3" cy="25.5" rx="2.0" ry="1.6" fill="#4a683c" opacity="0.74"/><ellipse cx="36.5" cy="33.0" rx="1.9" ry="2.1" fill="#182616" opacity="0.74"/><ellipse cx="43.7" cy="30.4" rx="1.8" ry="1.3" fill="#3c5830" opacity="0.72"/><ellipse cx="43.2" cy="16.4" rx="1.6" ry="1.1" fill="#182616" opacity="0.59"/><ellipse cx="46.5" cy="20.1" rx="1.9" ry="1.2" fill="#1e301c" opacity="0.63"/><ellipse cx="46.4" cy="27.7" rx="1.6" ry="1.0" fill="#182616" opacity="0.82"/><ellipse cx="35.4" cy="26.9" rx="0.9" ry="0.7" fill="#3c5830" opacity="0.62"/><ellipse cx="40.1" cy="37.5" rx="1.2" ry="1.1" fill="#1e301c" opacity="0.82"/><ellipse cx="35.3" cy="24.5" rx="1.7" ry="1.8" fill="#3c5830" opacity="0.89"/><ellipse cx="38.3" cy="24.1" rx="0.9" ry="0.6" fill="#4a683c" opacity="0.66"/><ellipse cx="44" cy="48" rx="8" ry="2.5" fill="#5a6a4a" opacity="0.8"/><ellipse cx="12" cy="50" rx="12" ry="3" fill="#829a4a" opacity="0.75"/><ellipse cx="30" cy="46" rx="10" ry="2" fill="#8aa050" opacity="0.7"/></g></svg>
<div style="position:absolute;left:0px;top:923px;width:1920px;height:54px;background:#1e1e1e;"></div>
<span class="t" style="left:7px;top:943.00px;font-size:14.6px;line-height:18px;color:#8e8e8e;transform:scaleX(0.9653);">Project name</span>
<div style="position:absolute;left:94px;top:935px;width:191px;height:32px;background:#0a0a0a;border:1px solid #2c2c2c;border-radius:4px;box-sizing:border-box;"></div>
<span class="t" style="left:112px;top:943.00px;font-size:13px;line-height:16px;color:#e6e6e6;transform:scaleX(0.9876);-webkit-text-stroke:0.15px #e6e6e6;">Exploration - Edited By Me</span>
<span class="t" style="left:307px;top:943.00px;font-size:14.6px;line-height:18px;color:#8e8e8e;transform:scaleX(0.9721);">Project location</span>
<svg style="position:absolute;left:414px;top:943px" width="18" height="16" viewBox="0 0 18 16"><path d="M0.500 1.500h5.500l1.500 2H16.500v11.500H0.500z" fill="#bcbcbc"/><path d="M0.500 3.400h7" stroke="#1e1e1e" stroke-width="0.800"/></svg>
<span class="t" style="left:438px;top:944.50px;font-size:13.6px;line-height:16px;color:#969696;transform:scaleX(0.9022);text-decoration:underline;text-decoration-thickness:1px;text-underline-offset:1.500px;">C:\Users\Public\Roaming</span>
<div style="position:absolute;left:1754px;top:935px;width:72px;height:32px;box-sizing:border-box;border:2px solid #9c9c9c;border-radius:16px"></div>
<span class="t" style="left:1782px;top:944.00px;font-size:11.5px;line-height:14px;color:#9a9a9a;transform:scaleX(0.8867);">Exit</span>
<div style="position:absolute;left:1842px;top:935px;width:73px;height:32px;border-radius:16px;background:#1473e6"></div>
<span class="t" style="left:1863px;top:943.50px;font-size:11.5px;line-height:14px;color:#ffffff;transform:scaleX(0.8688);-webkit-text-stroke:0.3px #fff;">Create</span>
<div style="position:absolute;left:0px;top:977px;width:1920px;height:29px;background:#222222;"></div>
<div style="position:absolute;left:0px;top:1006px;width:1920px;height:1px;background:#161616;"></div>
<div style="position:absolute;left:0px;top:1007px;width:1920px;height:73px;background:#1e1e1e;"></div>
</body>
</html>
